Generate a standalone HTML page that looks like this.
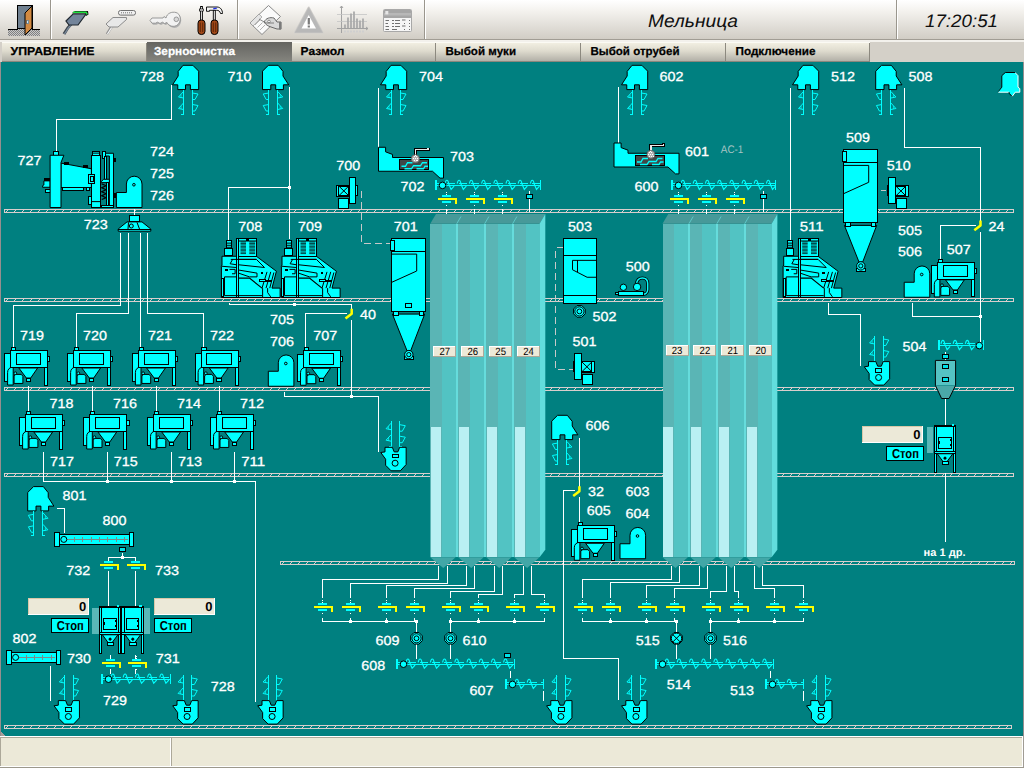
<!DOCTYPE html>
<html lang="ru"><head><meta charset="utf-8"><title>Мельница</title>
<style>html,body{margin:0;padding:0;background:#d4d0c8;overflow:hidden}svg{display:block;font-family:"Liberation Sans",sans-serif}text{white-space:pre}</style></head>
<body>
<svg width="1024" height="768" viewBox="0 0 1024 768">
<g shape-rendering="crispEdges">
<defs><linearGradient id="gTb" x1="0" y1="0" x2="0" y2="1"><stop offset="0" stop-color="#ffffff"/><stop offset="0.3" stop-color="#f3f1ed"/><stop offset="1" stop-color="#d1cdc5"/></linearGradient><linearGradient id="gTab" x1="0" y1="0" x2="0" y2="1"><stop offset="0" stop-color="#f4f1e4"/><stop offset="0.45" stop-color="#dedbce"/><stop offset="1" stop-color="#aeaca4"/></linearGradient><linearGradient id="gSel" x1="0" y1="0" x2="0" y2="1"><stop offset="0" stop-color="#646460"/><stop offset="1" stop-color="#85857f"/></linearGradient><pattern id="hatch" width="8" height="4" patternUnits="userSpaceOnUse"><rect width="8" height="4" fill="#008080"/><rect x="1" y="2" width="2" height="1" fill="#d4d0c8"/><rect x="3" y="1" width="2" height="1" fill="#d4d0c8"/></pattern><pattern id="dots" width="2" height="2" patternUnits="userSpaceOnUse"><rect width="2" height="2" fill="#c8c8c8"/><rect width="1" height="1" fill="#808080"/><rect x="1" y="1" width="1" height="1" fill="#808080"/></pattern></defs>
<rect x="0" y="0" width="1024" height="768" fill="#d4d0c8"/>
<rect x="0" y="0" width="1024" height="39" fill="url(#gTb)"/>
<rect x="0" y="39" width="1024" height="1" fill="#a19d94"/>
<rect x="0" y="40" width="1024" height="2" fill="#f3f1ec"/>
<rect x="50" y="0" width="1" height="39" fill="#9a968d"/>
<rect x="51" y="0" width="1" height="39" fill="#ffffff"/>
<rect x="237" y="0" width="1" height="39" fill="#9a968d"/>
<rect x="238" y="0" width="1" height="39" fill="#ffffff"/>
<rect x="424" y="0" width="1" height="39" fill="#9a968d"/>
<rect x="425" y="0" width="1" height="39" fill="#ffffff"/>
<rect x="896" y="0" width="1" height="39" fill="#9a968d"/>
<rect x="897" y="0" width="1" height="39" fill="#ffffff"/>
<rect x="0" y="42" width="1024" height="20" fill="#d4d0c8"/>
<rect x="2" y="42" width="145" height="20" fill="url(#gTab)"/>
<rect x="2" y="42" width="145" height="1" fill="#fbfaf4"/>
<rect x="146" y="43" width="1" height="19" fill="#8c897f"/>
<rect x="147" y="42" width="145" height="20" fill="url(#gSel)"/>
<rect x="292" y="42" width="144" height="20" fill="url(#gTab)"/>
<rect x="292" y="42" width="144" height="1" fill="#fbfaf4"/>
<rect x="435" y="43" width="1" height="19" fill="#8c897f"/>
<rect x="436" y="42" width="145" height="20" fill="url(#gTab)"/>
<rect x="436" y="42" width="145" height="1" fill="#fbfaf4"/>
<rect x="580" y="43" width="1" height="19" fill="#8c897f"/>
<rect x="581" y="42" width="145" height="20" fill="url(#gTab)"/>
<rect x="581" y="42" width="145" height="1" fill="#fbfaf4"/>
<rect x="725" y="43" width="1" height="19" fill="#8c897f"/>
<rect x="726" y="42" width="144" height="20" fill="url(#gTab)"/>
<rect x="726" y="42" width="144" height="1" fill="#fbfaf4"/>
<rect x="869" y="43" width="1" height="19" fill="#8c897f"/>
<rect x="2" y="61" width="868" height="1" fill="#8a877d"/>
<rect x="0" y="42" width="2" height="20" fill="#d4d0c8"/>
<rect x="0" y="62" width="1024" height="675" fill="#968e8e"/>
<rect x="1" y="62" width="1022" height="674" fill="#008080"/>
<polygon points="1,732 1,736 5,736" fill="#a8a09c" stroke="None" stroke-width="1"/>
<polygon points="1019,736 1023,736 1023,732" fill="#0a7474" stroke="None" stroke-width="1"/>
<rect x="0" y="736" width="1024" height="32" fill="#ece9d8"/>
<rect x="0" y="736" width="1024" height="1" fill="#ffffff"/>
<rect x="0" y="737" width="1022" height="1" fill="#aca899"/>
<rect x="0" y="737" width="1" height="30" fill="#aca899"/>
<rect x="170" y="738" width="1" height="29" fill="#ffffff"/>
<rect x="171" y="738" width="1" height="28" fill="#aca899"/>
<rect x="1022" y="737" width="1" height="30" fill="#ffffff"/>
<rect x="1023" y="736" width="1" height="32" fill="#a09c94"/>
<rect x="0" y="766" width="1023" height="1" fill="#ffffff"/>
<rect x="0" y="767" width="1024" height="1" fill="#9c988c"/>
<rect x="8" y="29" width="32" height="7" fill="url(#dots)"/>
<polygon points="17.5,5.5 32.5,5.5 32.5,28.5 17.5,28.5" fill="#708090" stroke="#000000" stroke-width="1"/>
<rect x="8" y="28.5" width="10" height="1" fill="#000000"/>
<rect x="32" y="28.5" width="8" height="1" fill="#000000"/>
<polygon points="25,13 32,6 32,28 25,35" fill="#d28a42" stroke="#000000" stroke-width="1" shape-rendering="geometricPrecision"/>
<rect x="26.5" y="20" width="2" height="3.5" fill="#c8e8f8" stroke="#405060" stroke-width="0.6"/>
<g shape-rendering="geometricPrecision"><path d="M64,34 C67,28 70,25 73,22" fill="none" stroke="#404850" stroke-width="3"/><path d="M64.5,34 C67.5,28 70.5,25 73.5,22.5" fill="none" stroke="#78889a" stroke-width="1.4"/><polygon points="66,21 73,14 86,14 78,25 69,25" fill="#73849a" stroke="#202830" stroke-width="1.2"/><polygon points="72,13 75,11 88,11 88.5,14.5 86,16 85.5,13.5 73,13.5" fill="#101010"/><path d="M73,12.2 H86 L87.2,14.4" fill="none" stroke="#20e040" stroke-width="1.6"/></g>
<g shape-rendering="geometricPrecision"><path d="M107,34 C110,28 113,25 116,22" fill="none" stroke="#909090" stroke-width="2.6"/><path d="M107.5,34 C110.5,28 113.5,25 116.5,22.5" fill="none" stroke="#f4f4f4" stroke-width="1.2"/><polygon points="106,24 113,17.5 126.5,17.5 126.5,19.5 118,27 109,27" fill="#e8e8e8" stroke="#8c8c8c" stroke-width="1"/><rect x="118.5" y="10.5" width="17" height="4.6" rx="2" fill="#f0f0f0" stroke="#707070" stroke-width="1"/><path d="M121,12.8 H133" stroke="#707070" stroke-width="1" stroke-dasharray="1,1"/></g>
<g shape-rendering="geometricPrecision"><path d="M150,20.5 L152,18 H163 L164,16.5 L166,18 C167,13 172,11.5 176,12.5 C181,14 181.5,21 178,24.5 C174,28 168.5,26 167,22.5 L164.5,23.5 L162.5,22.2 L160,23.5 L157.5,22.2 L155.5,23.2 H152 Z" fill="#b0b0b0" transform="translate(1,1.6)"/><path d="M150,20.5 L152,18 H163 L164,16.5 L166,18 C167,13 172,11.5 176,12.5 C181,14 181.5,21 178,24.5 C174,28 168.5,26 167,22.5 L164.5,23.5 L162.5,22.2 L160,23.5 L157.5,22.2 L155.5,23.2 H152 Z" fill="#f2f2f2" stroke="#909090" stroke-width="0.9"/><circle cx="176.3" cy="19.3" r="2.3" fill="#d8d8d8" stroke="#909090" stroke-width="0.9"/></g>
<g shape-rendering="geometricPrecision"><rect x="200.6" y="6.5" width="1.8" height="14" fill="#f0f0f0" stroke="#000" stroke-width="0.9"/><rect x="199.6" y="9" width="3.8" height="2" fill="#fff" stroke="#000" stroke-width="0.7"/><rect x="198" y="20" width="7" height="14.5" rx="3.2" fill="#a04818" stroke="#000" stroke-width="1"/><path d="M200.3,22.5 V32 M202.7,22.5 V32" stroke="#401800" stroke-width="0.7"/><rect x="213.3" y="10" width="2" height="11" fill="#f0f0f0" stroke="#000" stroke-width="0.9"/><rect x="211" y="20" width="7" height="14.5" rx="3.2" fill="#a04818" stroke="#000" stroke-width="1"/><path d="M213.3,22.5 V32 M215.7,22.5 V32" stroke="#401800" stroke-width="0.7"/><path d="M206.5,7 H217 C220.5,7 222.5,10 222.5,13.5 L220.5,13.5 C220,11 218.5,10.3 216.5,10.3 H209.5 V11.3 H206.5 Z" fill="#f4f4f4" stroke="#000" stroke-width="0.9"/><path d="M213.3,8.8 L216.8,8.1" stroke="#2030e0" stroke-width="1.4"/></g>
<g shape-rendering="geometricPrecision"><polygon points="250,23 268.5,5.5 280.5,16.5 262,34.5" fill="#fafafa" stroke="#8a8a8a" stroke-width="1"/><polygon points="250,23 259,14 262,17 253,26" fill="#e4e4e4" stroke="#8a8a8a" stroke-width="0.6"/><path d="M255,25 l5,-5 M257.5,27.5 l5,-5 M260,30 l5,-5" stroke="#a0a0a0" stroke-width="0.8"/><path d="M264,22 C266,18 270,17 274,18 L277,22 H281 V29 H277 L271,27 C268,26 266,25 264,22 Z" fill="#d8d8d8" stroke="#6a6a6a" stroke-width="1"/><circle cx="269" cy="21.5" r="1.3" fill="#fff" stroke="#6a6a6a" stroke-width="0.7"/><path d="M259,19 L266,23 L274,23" fill="none" stroke="#6a6a6a" stroke-width="0.8"/><rect x="279" y="22" width="2.2" height="7.5" fill="#7a7a7a"/></g>
<g shape-rendering="geometricPrecision"><polygon points="308.7,7.5 322.5,32.5 295,32.5" fill="#c6c6c6" stroke="#d2d0cc" stroke-width="2" stroke-linejoin="round"/><polygon points="308.7,7.5 322.5,32.5 295,32.5" fill="#b8b8b8" stroke="#bcbcbc" stroke-width="0.6" stroke-linejoin="round"/><polygon points="308.7,15 316,28.5 301.5,28.5" fill="#ffffff"/><rect x="307.7" y="18" width="2.2" height="6.5" fill="#7c7c7c"/><rect x="307.7" y="25.5" width="2.2" height="2" fill="#7c7c7c"/></g>
<g shape-rendering="geometricPrecision" stroke="#a2a2a2" fill="none"><path d="M341.5,6 V33 M337,28.5 H368 M341.5,6 l-1.5,2 M341.5,6 l1.5,2 M368,28.5 l-2,-1.5 M368,28.5 l-2,1.5" stroke-width="1"/><path d="M337,14.5 H367 M337,21.5 H367" stroke="#c4c4c4" stroke-width="0.8"/><path d="M345,28 V24.5 M348,28 V17.5 M351,28 V13.5 M354,28 V11.5 M357,28 V18.5 M360,28 V20.5 M363,28 V18.5" stroke="#ababab" stroke-width="1.8"/><path d="M344,31.5 H364" stroke="#cfcfcf" stroke-width="2" stroke-dasharray="2,1"/></g>
<g shape-rendering="geometricPrecision"><rect x="383.5" y="9.5" width="28" height="22" rx="1" fill="#f6f6f6" stroke="#a8a8a8" stroke-width="1"/><rect x="384" y="10" width="27" height="8" fill="#a6a6a6"/><rect x="384" y="13" width="27" height="2.5" fill="#b8b8b8"/><rect x="385.3" y="11" width="3" height="3.4" fill="#e6e6e6"/><path d="M385.5,20.5 H389 M392,20.5 H394 M395,20.5 H400 M402,20 H405.5 M409,20.5 H410" stroke="#707070" stroke-width="1"/><path d="M385.5,23.5 H388 M392,23.5 H394 M395,23.5 H400 M404,23.5 H405 M409,23.5 H410" stroke="#707070" stroke-width="1"/><path d="M385.5,26.5 H389 M392,26.5 H394 M395,26.5 H400 M402,26 H405.5 M409,26.5 H410" stroke="#707070" stroke-width="1"/><path d="M385.5,29.5 H389 M392,29.5 H397 M404,29.5 H405 M409,29.5 H410" stroke="#707070" stroke-width="1"/></g>
<defs><pattern id="hf1" x="4" y="209" width="8" height="4" patternUnits="userSpaceOnUse"><rect x="2" y="2" width="1" height="1" fill="#d8cecc"/><rect x="3" y="1" width="1" height="1" fill="#d8cecc"/></pattern></defs>
<rect x="4" y="209" width="1010" height="4" fill="url(#hf1)"/>
<rect x="4" y="209" width="1010" height="1" fill="#d8cecc"/>
<rect x="4" y="212" width="1010" height="1" fill="#d8cecc"/>
<rect x="4" y="209" width="1" height="4" fill="#d8cecc"/>
<rect x="1013" y="209" width="1" height="4" fill="#d8cecc"/>
<defs><pattern id="hf2" x="4" y="298" width="8" height="4" patternUnits="userSpaceOnUse"><rect x="2" y="2" width="1" height="1" fill="#d8cecc"/><rect x="3" y="1" width="1" height="1" fill="#d8cecc"/></pattern></defs>
<rect x="4" y="298" width="1010" height="4" fill="url(#hf2)"/>
<rect x="4" y="298" width="1010" height="1" fill="#d8cecc"/>
<rect x="4" y="301" width="1010" height="1" fill="#d8cecc"/>
<rect x="4" y="298" width="1" height="4" fill="#d8cecc"/>
<rect x="1013" y="298" width="1" height="4" fill="#d8cecc"/>
<defs><pattern id="hf3" x="4" y="387" width="8" height="4" patternUnits="userSpaceOnUse"><rect x="2" y="2" width="1" height="1" fill="#d8cecc"/><rect x="3" y="1" width="1" height="1" fill="#d8cecc"/></pattern></defs>
<rect x="4" y="387" width="1010" height="4" fill="url(#hf3)"/>
<rect x="4" y="387" width="1010" height="1" fill="#d8cecc"/>
<rect x="4" y="390" width="1010" height="1" fill="#d8cecc"/>
<rect x="4" y="387" width="1" height="4" fill="#d8cecc"/>
<rect x="1013" y="387" width="1" height="4" fill="#d8cecc"/>
<defs><pattern id="hf4" x="4" y="473" width="8" height="4" patternUnits="userSpaceOnUse"><rect x="2" y="2" width="1" height="1" fill="#d8cecc"/><rect x="3" y="1" width="1" height="1" fill="#d8cecc"/></pattern></defs>
<rect x="4" y="473" width="1010" height="4" fill="url(#hf4)"/>
<rect x="4" y="473" width="1010" height="1" fill="#d8cecc"/>
<rect x="4" y="476" width="1010" height="1" fill="#d8cecc"/>
<rect x="4" y="473" width="1" height="4" fill="#d8cecc"/>
<rect x="1013" y="473" width="1" height="4" fill="#d8cecc"/>
<defs><pattern id="hf5" x="280" y="561" width="8" height="4" patternUnits="userSpaceOnUse"><rect x="2" y="2" width="1" height="1" fill="#d8cecc"/><rect x="3" y="1" width="1" height="1" fill="#d8cecc"/></pattern></defs>
<rect x="280" y="561" width="735" height="4" fill="url(#hf5)"/>
<rect x="280" y="561" width="735" height="1" fill="#d8cecc"/>
<rect x="280" y="564" width="735" height="1" fill="#d8cecc"/>
<rect x="280" y="561" width="1" height="4" fill="#d8cecc"/>
<rect x="1014" y="561" width="1" height="4" fill="#d8cecc"/>
<defs><pattern id="hf6" x="4" y="725" width="8" height="4" patternUnits="userSpaceOnUse"><rect x="2" y="2" width="1" height="1" fill="#d8cecc"/><rect x="3" y="1" width="1" height="1" fill="#d8cecc"/></pattern></defs>
<rect x="4" y="725" width="1008" height="4" fill="url(#hf6)"/>
<rect x="4" y="725" width="1008" height="1" fill="#d8cecc"/>
<rect x="4" y="728" width="1008" height="1" fill="#d8cecc"/>
<rect x="4" y="725" width="1" height="4" fill="#d8cecc"/>
<rect x="1011" y="725" width="1" height="4" fill="#d8cecc"/>
<polyline points="171.5,84.5 171.5,119.5 56.5,119.5 56.5,152.5" fill="none" stroke="#ffffff" stroke-width="1"/>
<polyline points="289.5,86.5 289.5,238.5" fill="none" stroke="#ffffff" stroke-width="1"/>
<polyline points="289.5,187.5 228.5,187.5 228.5,240.5" fill="none" stroke="#ffffff" stroke-width="1"/>
<rect x="288" y="186" width="3" height="3" fill="#ffffff"/>
<polyline points="378.5,87.5 378.5,147.5" fill="none" stroke="#ffffff" stroke-width="1"/>
<polyline points="618.5,86.5 618.5,143.5" fill="none" stroke="#ffffff" stroke-width="1"/>
<polyline points="790.5,87.5 790.5,240.5" fill="none" stroke="#ffffff" stroke-width="1"/>
<polyline points="904.5,87.5 904.5,147.5 980.5,147.5 980.5,341.5" fill="none" stroke="#ffffff" stroke-width="1"/>
<polyline points="975.5,225.5 940.5,225.5 940.5,260.5" fill="none" stroke="#ffffff" stroke-width="1"/>
<polyline points="912.5,302.5 912.5,316.5 980.5,316.5" fill="none" stroke="#ffffff" stroke-width="1"/>
<rect x="979" y="315" width="3" height="3" fill="#ffffff"/>
<polyline points="134.5,208.5 134.5,216.5" fill="none" stroke="#ffffff" stroke-width="1"/>
<polyline points="120.5,232.5 120.5,305.5 13.5,305.5 13.5,348.5" fill="none" stroke="#ffffff" stroke-width="1"/>
<polyline points="128.5,232.5 128.5,313.5 76.5,313.5 76.5,348.5" fill="none" stroke="#ffffff" stroke-width="1"/>
<polyline points="140.5,232.5 140.5,348.5" fill="none" stroke="#ffffff" stroke-width="1"/>
<polyline points="147.5,232.5 147.5,313.5 203.5,313.5 203.5,348.5" fill="none" stroke="#ffffff" stroke-width="1"/>
<polyline points="28.5,385.5 28.5,412.5" fill="none" stroke="#ffffff" stroke-width="1"/>
<polyline points="92.5,385.5 92.5,412.5" fill="none" stroke="#ffffff" stroke-width="1"/>
<polyline points="156.5,385.5 156.5,412.5" fill="none" stroke="#ffffff" stroke-width="1"/>
<polyline points="219.5,385.5 219.5,412.5" fill="none" stroke="#ffffff" stroke-width="1"/>
<polyline points="43.5,451.5 43.5,481.5" fill="none" stroke="#ffffff" stroke-width="1"/>
<polyline points="107.5,451.5 107.5,481.5" fill="none" stroke="#ffffff" stroke-width="1"/>
<polyline points="171.5,451.5 171.5,481.5" fill="none" stroke="#ffffff" stroke-width="1"/>
<polyline points="234.5,451.5 234.5,481.5" fill="none" stroke="#ffffff" stroke-width="1"/>
<polyline points="43.5,481.5 255.5,481.5 255.5,701.5" fill="none" stroke="#ffffff" stroke-width="1"/>
<rect x="106" y="480" width="3" height="3" fill="#ffffff"/>
<rect x="170" y="480" width="3" height="3" fill="#ffffff"/>
<rect x="233" y="480" width="3" height="3" fill="#ffffff"/>
<polyline points="229.5,302.5 229.5,304.5 351.5,304.5 351.5,396.5" fill="none" stroke="#ffffff" stroke-width="1"/>
<polyline points="294.5,302.5 294.5,304.5" fill="none" stroke="#ffffff" stroke-width="1"/>
<rect x="293" y="303" width="3" height="3" fill="#ffffff"/>
<polyline points="346.5,313.5 305.5,313.5 305.5,348.5" fill="none" stroke="#ffffff" stroke-width="1"/>
<polyline points="284.5,391.5 284.5,396.5 378.5,396.5 378.5,451.5" fill="none" stroke="#ffffff" stroke-width="1"/>
<rect x="350" y="395" width="3" height="3" fill="#ffffff"/>
<polyline points="579.5,437.5 579.5,523.5" fill="none" stroke="#ffffff" stroke-width="1"/>
<polyline points="574.5,490.5 563.5,490.5 563.5,658.5 618.5,658.5 618.5,699.5" fill="none" stroke="#ffffff" stroke-width="1"/>
<polyline points="828.5,302.5 828.5,314.5 860.5,314.5 860.5,365.5" fill="none" stroke="#ffffff" stroke-width="1"/>
<polyline points="945.5,351.5 945.5,360.5" fill="none" stroke="#ffffff" stroke-width="1"/>
<polyline points="945.5,398.5 945.5,425.5" fill="none" stroke="#ffffff" stroke-width="1"/>
<polyline points="945.5,472.5 945.5,541.5" fill="none" stroke="#ffffff" stroke-width="1"/>
<polyline points="56.5,508.5 64.5,508.5 64.5,532.5" fill="none" stroke="#ffffff" stroke-width="1"/>
<polyline points="122.5,552.5 122.5,557.5" fill="none" stroke="#ffffff" stroke-width="1"/>
<polyline points="108.5,561.5 108.5,557.5 135.5,557.5 135.5,561.5" fill="none" stroke="#ffffff" stroke-width="1"/>
<rect x="121" y="556" width="3" height="3" fill="#ffffff"/>
<polyline points="108.5,570.5 108.5,606.5" fill="none" stroke="#ffffff" stroke-width="1"/>
<polyline points="135.5,570.5 135.5,606.5" fill="none" stroke="#ffffff" stroke-width="1"/>
<polyline points="50.5,665.5 50.5,700.5" fill="none" stroke="#ffffff" stroke-width="1"/>
<polyline points="110.5,654.5 110.5,659.5" fill="none" stroke="#ffffff" stroke-width="1"/>
<polyline points="135.5,654.5 135.5,659.5" fill="none" stroke="#ffffff" stroke-width="1"/>
<polyline points="110.5,668.5 110.5,673.5" fill="none" stroke="#ffffff" stroke-width="1"/>
<polyline points="135.5,668.5 135.5,673.5" fill="none" stroke="#ffffff" stroke-width="1"/>
<polyline points="361.5,190.5 361.5,243.5 390.5,243.5" fill="none" stroke="#c8c8c8" stroke-width="1" stroke-dasharray="7,4"/>
<polyline points="563.5,247.5 555.5,247.5 555.5,369.5 573.5,369.5" fill="none" stroke="#c8c8c8" stroke-width="1" stroke-dasharray="7,4"/>
<polyline points="881,190.5 886,190.5" fill="none" stroke="#c8c8c8" stroke-width="1"/>
<polyline points="438.5,565.5 438.5,579.5 322.5,579.5 322.5,597.5" fill="none" stroke="#ffffff" stroke-width="1"/>
<polyline points="447.5,565.5 447.5,583.5 350.5,583.5 350.5,597.5" fill="none" stroke="#ffffff" stroke-width="1"/>
<polyline points="466.5,565.5 466.5,585.5 386.5,585.5 386.5,597.5" fill="none" stroke="#ffffff" stroke-width="1"/>
<polyline points="474.5,565.5 474.5,588.5 414.5,588.5 414.5,597.5" fill="none" stroke="#ffffff" stroke-width="1"/>
<polyline points="494.5,565.5 494.5,591.5 450.5,591.5 450.5,597.5" fill="none" stroke="#ffffff" stroke-width="1"/>
<polyline points="502.5,565.5 502.5,594.5 478.5,594.5 478.5,597.5" fill="none" stroke="#ffffff" stroke-width="1"/>
<polyline points="523.5,565.5 523.5,594.5 514.5,594.5 514.5,597.5" fill="none" stroke="#ffffff" stroke-width="1"/>
<polyline points="531.5,565.5 531.5,594.5 544.5,594.5 544.5,597.5" fill="none" stroke="#ffffff" stroke-width="1"/>
<polyline points="671.5,565.5 671.5,579.5 582.5,579.5 582.5,597.5" fill="none" stroke="#ffffff" stroke-width="1"/>
<polyline points="679.5,565.5 679.5,582.5 610.5,582.5 610.5,597.5" fill="none" stroke="#ffffff" stroke-width="1"/>
<polyline points="699.5,565.5 699.5,585.5 646.5,585.5 646.5,597.5" fill="none" stroke="#ffffff" stroke-width="1"/>
<polyline points="707.5,565.5 707.5,588.5 674.5,588.5 674.5,597.5" fill="none" stroke="#ffffff" stroke-width="1"/>
<polyline points="726.5,565.5 726.5,591.5 710.5,591.5 710.5,597.5" fill="none" stroke="#ffffff" stroke-width="1"/>
<polyline points="734.5,565.5 734.5,591.5 738.5,591.5 738.5,597.5" fill="none" stroke="#ffffff" stroke-width="1"/>
<polyline points="754.5,565.5 754.5,588.5 774.5,588.5 774.5,597.5" fill="none" stroke="#ffffff" stroke-width="1"/>
<polyline points="762.5,565.5 762.5,585.5 803.5,585.5 803.5,597.5" fill="none" stroke="#ffffff" stroke-width="1"/>
<rect x="318" y="603" width="8.5" height="2" fill="#00ffff"/>
<rect x="318" y="609" width="8.5" height="2" fill="#00ffff"/>
<rect x="314" y="606" width="19" height="2" fill="#ffff00"/>
<rect x="331" y="606" width="2" height="6" fill="#ffff00"/>
<rect x="322" y="600" width="1" height="1" fill="#ffffff"/>
<rect x="322" y="602" width="1" height="1" fill="#ffffff"/>
<rect x="322" y="612.5" width="1" height="1" fill="#ffffff"/>
<polyline points="322.5,617.5 322.5,621.5" fill="none" stroke="#ffffff" stroke-width="1"/>
<rect x="346" y="603" width="8.5" height="2" fill="#00ffff"/>
<rect x="346" y="609" width="8.5" height="2" fill="#00ffff"/>
<rect x="342" y="606" width="19" height="2" fill="#ffff00"/>
<rect x="359" y="606" width="2" height="6" fill="#ffff00"/>
<rect x="350" y="600" width="1" height="1" fill="#ffffff"/>
<rect x="350" y="602" width="1" height="1" fill="#ffffff"/>
<rect x="350" y="612.5" width="1" height="1" fill="#ffffff"/>
<polyline points="350.5,617.5 350.5,621.5" fill="none" stroke="#ffffff" stroke-width="1"/>
<rect x="382" y="603" width="8.5" height="2" fill="#00ffff"/>
<rect x="382" y="609" width="8.5" height="2" fill="#00ffff"/>
<rect x="378" y="606" width="19" height="2" fill="#ffff00"/>
<rect x="395" y="606" width="2" height="6" fill="#ffff00"/>
<rect x="386" y="600" width="1" height="1" fill="#ffffff"/>
<rect x="386" y="602" width="1" height="1" fill="#ffffff"/>
<rect x="386" y="612.5" width="1" height="1" fill="#ffffff"/>
<polyline points="386.5,617.5 386.5,621.5" fill="none" stroke="#ffffff" stroke-width="1"/>
<rect x="410" y="603" width="8.5" height="2" fill="#00ffff"/>
<rect x="410" y="609" width="8.5" height="2" fill="#00ffff"/>
<rect x="406" y="606" width="19" height="2" fill="#ffff00"/>
<rect x="423" y="606" width="2" height="6" fill="#ffff00"/>
<rect x="414" y="600" width="1" height="1" fill="#ffffff"/>
<rect x="414" y="602" width="1" height="1" fill="#ffffff"/>
<rect x="414" y="612.5" width="1" height="1" fill="#ffffff"/>
<polyline points="414.5,617.5 414.5,621.5" fill="none" stroke="#ffffff" stroke-width="1"/>
<rect x="446" y="603" width="8.5" height="2" fill="#00ffff"/>
<rect x="446" y="609" width="8.5" height="2" fill="#00ffff"/>
<rect x="442" y="606" width="19" height="2" fill="#ffff00"/>
<rect x="459" y="606" width="2" height="6" fill="#ffff00"/>
<rect x="450" y="600" width="1" height="1" fill="#ffffff"/>
<rect x="450" y="602" width="1" height="1" fill="#ffffff"/>
<rect x="450" y="612.5" width="1" height="1" fill="#ffffff"/>
<polyline points="450.5,617.5 450.5,621.5" fill="none" stroke="#ffffff" stroke-width="1"/>
<rect x="474" y="603" width="8.5" height="2" fill="#00ffff"/>
<rect x="474" y="609" width="8.5" height="2" fill="#00ffff"/>
<rect x="470" y="606" width="19" height="2" fill="#ffff00"/>
<rect x="487" y="606" width="2" height="6" fill="#ffff00"/>
<rect x="478" y="600" width="1" height="1" fill="#ffffff"/>
<rect x="478" y="602" width="1" height="1" fill="#ffffff"/>
<rect x="478" y="612.5" width="1" height="1" fill="#ffffff"/>
<polyline points="478.5,617.5 478.5,621.5" fill="none" stroke="#ffffff" stroke-width="1"/>
<rect x="510" y="603" width="8.5" height="2" fill="#00ffff"/>
<rect x="510" y="609" width="8.5" height="2" fill="#00ffff"/>
<rect x="506" y="606" width="19" height="2" fill="#ffff00"/>
<rect x="523" y="606" width="2" height="6" fill="#ffff00"/>
<rect x="514" y="600" width="1" height="1" fill="#ffffff"/>
<rect x="514" y="602" width="1" height="1" fill="#ffffff"/>
<rect x="514" y="612.5" width="1" height="1" fill="#ffffff"/>
<polyline points="514.5,617.5 514.5,621.5" fill="none" stroke="#ffffff" stroke-width="1"/>
<rect x="540" y="603" width="8.5" height="2" fill="#00ffff"/>
<rect x="540" y="609" width="8.5" height="2" fill="#00ffff"/>
<rect x="536" y="606" width="19" height="2" fill="#ffff00"/>
<rect x="553" y="606" width="2" height="6" fill="#ffff00"/>
<rect x="544" y="600" width="1" height="1" fill="#ffffff"/>
<rect x="544" y="602" width="1" height="1" fill="#ffffff"/>
<rect x="544" y="612.5" width="1" height="1" fill="#ffffff"/>
<polyline points="544.5,617.5 544.5,621.5" fill="none" stroke="#ffffff" stroke-width="1"/>
<rect x="578" y="603" width="8.5" height="2" fill="#00ffff"/>
<rect x="578" y="609" width="8.5" height="2" fill="#00ffff"/>
<rect x="574" y="606" width="19" height="2" fill="#ffff00"/>
<rect x="591" y="606" width="2" height="6" fill="#ffff00"/>
<rect x="582" y="600" width="1" height="1" fill="#ffffff"/>
<rect x="582" y="602" width="1" height="1" fill="#ffffff"/>
<rect x="582" y="612.5" width="1" height="1" fill="#ffffff"/>
<polyline points="582.5,617.5 582.5,621.5" fill="none" stroke="#ffffff" stroke-width="1"/>
<rect x="606" y="603" width="8.5" height="2" fill="#00ffff"/>
<rect x="606" y="609" width="8.5" height="2" fill="#00ffff"/>
<rect x="602" y="606" width="19" height="2" fill="#ffff00"/>
<rect x="619" y="606" width="2" height="6" fill="#ffff00"/>
<rect x="610" y="600" width="1" height="1" fill="#ffffff"/>
<rect x="610" y="602" width="1" height="1" fill="#ffffff"/>
<rect x="610" y="612.5" width="1" height="1" fill="#ffffff"/>
<polyline points="610.5,617.5 610.5,621.5" fill="none" stroke="#ffffff" stroke-width="1"/>
<rect x="642" y="603" width="8.5" height="2" fill="#00ffff"/>
<rect x="642" y="609" width="8.5" height="2" fill="#00ffff"/>
<rect x="638" y="606" width="19" height="2" fill="#ffff00"/>
<rect x="655" y="606" width="2" height="6" fill="#ffff00"/>
<rect x="646" y="600" width="1" height="1" fill="#ffffff"/>
<rect x="646" y="602" width="1" height="1" fill="#ffffff"/>
<rect x="646" y="612.5" width="1" height="1" fill="#ffffff"/>
<polyline points="646.5,617.5 646.5,621.5" fill="none" stroke="#ffffff" stroke-width="1"/>
<rect x="670" y="603" width="8.5" height="2" fill="#00ffff"/>
<rect x="670" y="609" width="8.5" height="2" fill="#00ffff"/>
<rect x="666" y="606" width="19" height="2" fill="#ffff00"/>
<rect x="683" y="606" width="2" height="6" fill="#ffff00"/>
<rect x="674" y="600" width="1" height="1" fill="#ffffff"/>
<rect x="674" y="602" width="1" height="1" fill="#ffffff"/>
<rect x="674" y="612.5" width="1" height="1" fill="#ffffff"/>
<polyline points="674.5,617.5 674.5,621.5" fill="none" stroke="#ffffff" stroke-width="1"/>
<rect x="706" y="603" width="8.5" height="2" fill="#00ffff"/>
<rect x="706" y="609" width="8.5" height="2" fill="#00ffff"/>
<rect x="702" y="606" width="19" height="2" fill="#ffff00"/>
<rect x="719" y="606" width="2" height="6" fill="#ffff00"/>
<rect x="710" y="600" width="1" height="1" fill="#ffffff"/>
<rect x="710" y="602" width="1" height="1" fill="#ffffff"/>
<rect x="710" y="612.5" width="1" height="1" fill="#ffffff"/>
<polyline points="710.5,617.5 710.5,621.5" fill="none" stroke="#ffffff" stroke-width="1"/>
<rect x="734" y="603" width="8.5" height="2" fill="#00ffff"/>
<rect x="734" y="609" width="8.5" height="2" fill="#00ffff"/>
<rect x="730" y="606" width="19" height="2" fill="#ffff00"/>
<rect x="747" y="606" width="2" height="6" fill="#ffff00"/>
<rect x="738" y="600" width="1" height="1" fill="#ffffff"/>
<rect x="738" y="602" width="1" height="1" fill="#ffffff"/>
<rect x="738" y="612.5" width="1" height="1" fill="#ffffff"/>
<polyline points="738.5,617.5 738.5,621.5" fill="none" stroke="#ffffff" stroke-width="1"/>
<rect x="770" y="603" width="8.5" height="2" fill="#00ffff"/>
<rect x="770" y="609" width="8.5" height="2" fill="#00ffff"/>
<rect x="766" y="606" width="19" height="2" fill="#ffff00"/>
<rect x="783" y="606" width="2" height="6" fill="#ffff00"/>
<rect x="774" y="600" width="1" height="1" fill="#ffffff"/>
<rect x="774" y="602" width="1" height="1" fill="#ffffff"/>
<rect x="774" y="612.5" width="1" height="1" fill="#ffffff"/>
<polyline points="774.5,617.5 774.5,621.5" fill="none" stroke="#ffffff" stroke-width="1"/>
<rect x="799" y="603" width="8.5" height="2" fill="#00ffff"/>
<rect x="799" y="609" width="8.5" height="2" fill="#00ffff"/>
<rect x="795" y="606" width="19" height="2" fill="#ffff00"/>
<rect x="812" y="606" width="2" height="6" fill="#ffff00"/>
<rect x="803" y="600" width="1" height="1" fill="#ffffff"/>
<rect x="803" y="602" width="1" height="1" fill="#ffffff"/>
<rect x="803" y="612.5" width="1" height="1" fill="#ffffff"/>
<polyline points="803.5,617.5 803.5,621.5" fill="none" stroke="#ffffff" stroke-width="1"/>
<polyline points="322.5,621.5 416.5,621.5 416.5,658.5" fill="none" stroke="#ffffff" stroke-width="1"/>
<polyline points="544.5,621.5 450.5,621.5 450.5,658.5" fill="none" stroke="#ffffff" stroke-width="1"/>
<polyline points="582.5,621.5 676.5,621.5 676.5,658.5" fill="none" stroke="#ffffff" stroke-width="1"/>
<polyline points="803.5,621.5 710.5,621.5 710.5,658.5" fill="none" stroke="#ffffff" stroke-width="1"/>
<rect x="349" y="620" width="3" height="3" fill="#ffffff"/>
<rect x="385" y="620" width="3" height="3" fill="#ffffff"/>
<rect x="415" y="620" width="3" height="3" fill="#ffffff"/>
<rect x="449" y="620" width="3" height="3" fill="#ffffff"/>
<rect x="477" y="620" width="3" height="3" fill="#ffffff"/>
<rect x="513" y="620" width="3" height="3" fill="#ffffff"/>
<rect x="609" y="620" width="3" height="3" fill="#ffffff"/>
<rect x="645" y="620" width="3" height="3" fill="#ffffff"/>
<rect x="675" y="620" width="3" height="3" fill="#ffffff"/>
<rect x="709" y="620" width="3" height="3" fill="#ffffff"/>
<rect x="737" y="620" width="3" height="3" fill="#ffffff"/>
<rect x="773" y="620" width="3" height="3" fill="#ffffff"/>
<polyline points="510.5,670.5 510.5,677.5" fill="none" stroke="#ffffff" stroke-width="1"/>
<polyline points="543.5,690.5 543.5,700.5" fill="none" stroke="#ffffff" stroke-width="1"/>
<polyline points="770.5,670.5 770.5,677.5" fill="none" stroke="#ffffff" stroke-width="1"/>
<polyline points="803.5,690.5 803.5,700.5" fill="none" stroke="#ffffff" stroke-width="1"/>
<polygon points="430.25,223.75 436,214 545.3,214 539.55,223.75" fill="#479999" stroke="None" stroke-width="1" shape-rendering="geometricPrecision"/>
<polygon points="539.55,223.75 545.3,214 545.3,549.75 539.55,557.25" fill="#62dddd" stroke="None" stroke-width="1" shape-rendering="geometricPrecision"/>
<rect x="430.25" y="223.75" width="11.5" height="333.5" fill="#5ab5b5"/>
<rect x="441.75" y="223.75" width="13.95" height="333.5" fill="#52c3c3"/>
<rect x="455.7" y="223.75" width="2.5" height="333.5" fill="#66dcdc"/>
<polyline points="456.7,223.75 461.01,216.5" fill="none" stroke="#66dcdc" stroke-width="1" shape-rendering="geometricPrecision" opacity="0.7"/>
<rect x="430.75" y="427" width="10" height="130.25" fill="#b9f0f3"/>
<polygon points="430.25,557.25 455.7,557.25 443.28,568" fill="#42a7a7" stroke="None" stroke-width="1" shape-rendering="geometricPrecision"/>
<rect x="433.25" y="346.3" width="22.5" height="10.5" fill="#ece9d8"/>
<rect x="433.25" y="346.3" width="22.5" height="1" fill="#ffffff"/>
<rect x="433.25" y="346.3" width="1" height="10.5" fill="#ffffff"/>
<rect x="433.25" y="356.3" width="22.5" height="1" fill="#aca899"/>
<rect x="455.25" y="346.3" width="1" height="11" fill="#aca899"/>
<rect x="458.2" y="223.75" width="11.5" height="333.5" fill="#5ab5b5"/>
<rect x="469.7" y="223.75" width="13.95" height="333.5" fill="#52c3c3"/>
<rect x="483.65" y="223.75" width="2.5" height="333.5" fill="#66dcdc"/>
<polyline points="484.65,223.75 488.96,216.5" fill="none" stroke="#66dcdc" stroke-width="1" shape-rendering="geometricPrecision" opacity="0.7"/>
<rect x="458.7" y="427" width="10" height="130.25" fill="#b9f0f3"/>
<polygon points="458.2,557.25 483.65,557.25 471.23,568" fill="#42a7a7" stroke="None" stroke-width="1" shape-rendering="geometricPrecision"/>
<rect x="461.2" y="346.3" width="22.5" height="10.5" fill="#ece9d8"/>
<rect x="461.2" y="346.3" width="22.5" height="1" fill="#ffffff"/>
<rect x="461.2" y="346.3" width="1" height="10.5" fill="#ffffff"/>
<rect x="461.2" y="356.3" width="22.5" height="1" fill="#aca899"/>
<rect x="483.2" y="346.3" width="1" height="11" fill="#aca899"/>
<rect x="486.15" y="223.75" width="11.5" height="333.5" fill="#5ab5b5"/>
<rect x="497.65" y="223.75" width="13.95" height="333.5" fill="#52c3c3"/>
<rect x="511.6" y="223.75" width="2.5" height="333.5" fill="#66dcdc"/>
<polyline points="512.6,223.75 516.91,216.5" fill="none" stroke="#66dcdc" stroke-width="1" shape-rendering="geometricPrecision" opacity="0.7"/>
<rect x="486.65" y="427" width="10" height="130.25" fill="#b9f0f3"/>
<polygon points="486.15,557.25 511.6,557.25 499.18,568" fill="#42a7a7" stroke="None" stroke-width="1" shape-rendering="geometricPrecision"/>
<rect x="489.15" y="346.3" width="22.5" height="10.5" fill="#ece9d8"/>
<rect x="489.15" y="346.3" width="22.5" height="1" fill="#ffffff"/>
<rect x="489.15" y="346.3" width="1" height="10.5" fill="#ffffff"/>
<rect x="489.15" y="356.3" width="22.5" height="1" fill="#aca899"/>
<rect x="511.15" y="346.3" width="1" height="11" fill="#aca899"/>
<rect x="514.1" y="223.75" width="11.5" height="333.5" fill="#5ab5b5"/>
<rect x="525.6" y="223.75" width="13.95" height="333.5" fill="#52c3c3"/>
<rect x="514.6" y="427" width="10" height="130.25" fill="#b9f0f3"/>
<polygon points="514.1,557.25 539.55,557.25 527.12,568" fill="#42a7a7" stroke="None" stroke-width="1" shape-rendering="geometricPrecision"/>
<rect x="517.1" y="346.3" width="22.5" height="10.5" fill="#ece9d8"/>
<rect x="517.1" y="346.3" width="22.5" height="1" fill="#ffffff"/>
<rect x="517.1" y="346.3" width="1" height="10.5" fill="#ffffff"/>
<rect x="517.1" y="356.3" width="22.5" height="1" fill="#aca899"/>
<rect x="539.1" y="346.3" width="1" height="11" fill="#aca899"/>
<polygon points="662.5,223.75 668.25,214 777.35,214 771.6,223.75" fill="#479999" stroke="None" stroke-width="1" shape-rendering="geometricPrecision"/>
<polygon points="771.6,223.75 777.35,214 777.35,549.75 771.6,557.25" fill="#62dddd" stroke="None" stroke-width="1" shape-rendering="geometricPrecision"/>
<rect x="662.5" y="223.75" width="11.5" height="333.5" fill="#5ab5b5"/>
<rect x="674" y="223.75" width="13.9" height="333.5" fill="#52c3c3"/>
<rect x="687.9" y="223.75" width="2.5" height="333.5" fill="#66dcdc"/>
<polyline points="688.9,223.75 693.21,216.5" fill="none" stroke="#66dcdc" stroke-width="1" shape-rendering="geometricPrecision" opacity="0.7"/>
<rect x="663" y="427" width="10" height="130.25" fill="#b9f0f3"/>
<polygon points="662.5,557.25 687.9,557.25 675.5,568" fill="#42a7a7" stroke="None" stroke-width="1" shape-rendering="geometricPrecision"/>
<rect x="665.5" y="345.2" width="22.5" height="10.5" fill="#ece9d8"/>
<rect x="665.5" y="345.2" width="22.5" height="1" fill="#ffffff"/>
<rect x="665.5" y="345.2" width="1" height="10.5" fill="#ffffff"/>
<rect x="665.5" y="355.2" width="22.5" height="1" fill="#aca899"/>
<rect x="687.5" y="345.2" width="1" height="11" fill="#aca899"/>
<rect x="690.4" y="223.75" width="11.5" height="333.5" fill="#5ab5b5"/>
<rect x="701.9" y="223.75" width="13.9" height="333.5" fill="#52c3c3"/>
<rect x="715.8" y="223.75" width="2.5" height="333.5" fill="#66dcdc"/>
<polyline points="716.8,223.75 721.11,216.5" fill="none" stroke="#66dcdc" stroke-width="1" shape-rendering="geometricPrecision" opacity="0.7"/>
<rect x="690.9" y="427" width="10" height="130.25" fill="#b9f0f3"/>
<polygon points="690.4,557.25 715.8,557.25 703.4,568" fill="#42a7a7" stroke="None" stroke-width="1" shape-rendering="geometricPrecision"/>
<rect x="693.4" y="345.2" width="22.5" height="10.5" fill="#ece9d8"/>
<rect x="693.4" y="345.2" width="22.5" height="1" fill="#ffffff"/>
<rect x="693.4" y="345.2" width="1" height="10.5" fill="#ffffff"/>
<rect x="693.4" y="355.2" width="22.5" height="1" fill="#aca899"/>
<rect x="715.4" y="345.2" width="1" height="11" fill="#aca899"/>
<rect x="718.3" y="223.75" width="11.5" height="333.5" fill="#5ab5b5"/>
<rect x="729.8" y="223.75" width="13.9" height="333.5" fill="#52c3c3"/>
<rect x="743.7" y="223.75" width="2.5" height="333.5" fill="#66dcdc"/>
<polyline points="744.7,223.75 749.01,216.5" fill="none" stroke="#66dcdc" stroke-width="1" shape-rendering="geometricPrecision" opacity="0.7"/>
<rect x="718.8" y="427" width="10" height="130.25" fill="#b9f0f3"/>
<polygon points="718.3,557.25 743.7,557.25 731.3,568" fill="#42a7a7" stroke="None" stroke-width="1" shape-rendering="geometricPrecision"/>
<rect x="721.3" y="345.2" width="22.5" height="10.5" fill="#ece9d8"/>
<rect x="721.3" y="345.2" width="22.5" height="1" fill="#ffffff"/>
<rect x="721.3" y="345.2" width="1" height="10.5" fill="#ffffff"/>
<rect x="721.3" y="355.2" width="22.5" height="1" fill="#aca899"/>
<rect x="743.3" y="345.2" width="1" height="11" fill="#aca899"/>
<rect x="746.2" y="223.75" width="11.5" height="333.5" fill="#5ab5b5"/>
<rect x="757.7" y="223.75" width="13.9" height="333.5" fill="#52c3c3"/>
<rect x="746.7" y="427" width="10" height="130.25" fill="#b9f0f3"/>
<polygon points="746.2,557.25 771.6,557.25 759.2,568" fill="#42a7a7" stroke="None" stroke-width="1" shape-rendering="geometricPrecision"/>
<rect x="749.2" y="345.2" width="22.5" height="10.5" fill="#ece9d8"/>
<rect x="749.2" y="345.2" width="22.5" height="1" fill="#ffffff"/>
<rect x="749.2" y="345.2" width="1" height="10.5" fill="#ffffff"/>
<rect x="749.2" y="355.2" width="22.5" height="1" fill="#aca899"/>
<rect x="771.2" y="345.2" width="1" height="11" fill="#aca899"/>
<rect x="442" y="195" width="8.5" height="2" fill="#00ffff"/>
<rect x="442" y="201" width="8.5" height="2" fill="#00ffff"/>
<rect x="438" y="198" width="19" height="2" fill="#ffff00"/>
<rect x="455" y="198" width="2" height="6" fill="#ffff00"/>
<rect x="446" y="192" width="1" height="1" fill="#ffffff"/>
<rect x="446" y="194" width="1" height="1" fill="#ffffff"/>
<rect x="446" y="204.5" width="1" height="1" fill="#ffffff"/>
<polyline points="446.5,208.5 446.5,214" fill="none" stroke="#ffffff" stroke-width="1"/>
<rect x="470" y="195" width="8.5" height="2" fill="#00ffff"/>
<rect x="470" y="201" width="8.5" height="2" fill="#00ffff"/>
<rect x="466" y="198" width="19" height="2" fill="#ffff00"/>
<rect x="483" y="198" width="2" height="6" fill="#ffff00"/>
<rect x="474" y="192" width="1" height="1" fill="#ffffff"/>
<rect x="474" y="194" width="1" height="1" fill="#ffffff"/>
<rect x="474" y="204.5" width="1" height="1" fill="#ffffff"/>
<polyline points="474.5,208.5 474.5,214" fill="none" stroke="#ffffff" stroke-width="1"/>
<rect x="498" y="195" width="8.5" height="2" fill="#00ffff"/>
<rect x="498" y="201" width="8.5" height="2" fill="#00ffff"/>
<rect x="494" y="198" width="19" height="2" fill="#ffff00"/>
<rect x="511" y="198" width="2" height="6" fill="#ffff00"/>
<rect x="502" y="192" width="1" height="1" fill="#ffffff"/>
<rect x="502" y="194" width="1" height="1" fill="#ffffff"/>
<rect x="502" y="204.5" width="1" height="1" fill="#ffffff"/>
<polyline points="502.5,208.5 502.5,214" fill="none" stroke="#ffffff" stroke-width="1"/>
<rect x="674" y="195" width="8.5" height="2" fill="#00ffff"/>
<rect x="674" y="201" width="8.5" height="2" fill="#00ffff"/>
<rect x="670" y="198" width="19" height="2" fill="#ffff00"/>
<rect x="687" y="198" width="2" height="6" fill="#ffff00"/>
<rect x="678" y="192" width="1" height="1" fill="#ffffff"/>
<rect x="678" y="194" width="1" height="1" fill="#ffffff"/>
<rect x="678" y="204.5" width="1" height="1" fill="#ffffff"/>
<polyline points="678.5,208.5 678.5,214" fill="none" stroke="#ffffff" stroke-width="1"/>
<rect x="702" y="195" width="8.5" height="2" fill="#00ffff"/>
<rect x="702" y="201" width="8.5" height="2" fill="#00ffff"/>
<rect x="698" y="198" width="19" height="2" fill="#ffff00"/>
<rect x="715" y="198" width="2" height="6" fill="#ffff00"/>
<rect x="706" y="192" width="1" height="1" fill="#ffffff"/>
<rect x="706" y="194" width="1" height="1" fill="#ffffff"/>
<rect x="706" y="204.5" width="1" height="1" fill="#ffffff"/>
<polyline points="706.5,208.5 706.5,214" fill="none" stroke="#ffffff" stroke-width="1"/>
<rect x="730" y="195" width="8.5" height="2" fill="#00ffff"/>
<rect x="730" y="201" width="8.5" height="2" fill="#00ffff"/>
<rect x="726" y="198" width="19" height="2" fill="#ffff00"/>
<rect x="743" y="198" width="2" height="6" fill="#ffff00"/>
<rect x="734" y="192" width="1" height="1" fill="#ffffff"/>
<rect x="734" y="194" width="1" height="1" fill="#ffffff"/>
<rect x="734" y="204.5" width="1" height="1" fill="#ffffff"/>
<polyline points="734.5,208.5 734.5,214" fill="none" stroke="#ffffff" stroke-width="1"/>
<polyline points="529.5,191 529.5,212" fill="none" stroke="#ffffff" stroke-width="1"/>
<rect x="526.75" y="194.5" width="5.5" height="3.5" fill="#00e0e8" stroke="#000000" stroke-width="1"/>
<polyline points="763.5,191 763.5,212" fill="none" stroke="#ffffff" stroke-width="1"/>
<rect x="760.75" y="194.5" width="5.5" height="3.5" fill="#00e0e8" stroke="#000000" stroke-width="1"/>
<polygon points="183.06,65.3 192.83,65.3 198.7,71.16 198.7,89.6 190.39,89.6 190.39,84.82 185.5,84.82 185.5,89.6 177.78,89.6 177.78,84.82 172.5,84.82 178.17,76.03 178.17,71.4" fill="#00ffff" stroke="#000000" stroke-width="1" shape-rendering="geometricPrecision"/>
<polyline points="183.5,89.5 183.5,114.5" fill="none" stroke="#00ffff" stroke-width="1"/>
<polyline points="192.5,89.5 192.5,114.5" fill="none" stroke="#00ffff" stroke-width="1"/>
<polyline points="183.5,91.5 178.5,97 183.5,98" fill="none" stroke="#00ffff" stroke-width="1" shape-rendering="geometricPrecision"/>
<polyline points="181,94.5 181,97.5" fill="none" stroke="#00ffff" stroke-width="0.7" shape-rendering="geometricPrecision"/>
<polyline points="192.5,93 198,94 195,99.5 192.5,99.5" fill="none" stroke="#00ffff" stroke-width="1" shape-rendering="geometricPrecision"/>
<polyline points="183.5,103 178.5,108.5 183.5,109.5" fill="none" stroke="#00ffff" stroke-width="1" shape-rendering="geometricPrecision"/>
<polyline points="181,106 181,109" fill="none" stroke="#00ffff" stroke-width="0.7" shape-rendering="geometricPrecision"/>
<polyline points="192.5,104.5 198,105.5 195,111 192.5,111" fill="none" stroke="#00ffff" stroke-width="1" shape-rendering="geometricPrecision"/>
<polyline points="181,114 183.5,114" fill="none" stroke="#00ffff" stroke-width="1"/>
<polyline points="192.5,114 195,114" fill="none" stroke="#00ffff" stroke-width="1"/>
<polygon points="278.14,65.3 268.37,65.3 262.5,71.16 262.5,89.6 270.81,89.6 270.81,84.82 275.7,84.82 275.7,89.6 283.42,89.6 283.42,84.82 288.7,84.82 283.03,76.03 283.03,71.4" fill="#00ffff" stroke="#000000" stroke-width="1" shape-rendering="geometricPrecision"/>
<polyline points="268.7,89.5 268.7,114.5" fill="none" stroke="#00ffff" stroke-width="1"/>
<polyline points="277.7,89.5 277.7,114.5" fill="none" stroke="#00ffff" stroke-width="1"/>
<polyline points="277.7,91.5 282.7,97 277.7,98" fill="none" stroke="#00ffff" stroke-width="1" shape-rendering="geometricPrecision"/>
<polyline points="280.2,94.5 280.2,97.5" fill="none" stroke="#00ffff" stroke-width="0.7" shape-rendering="geometricPrecision"/>
<polyline points="268.7,93 263.2,94 266.2,99.5 268.7,99.5" fill="none" stroke="#00ffff" stroke-width="1" shape-rendering="geometricPrecision"/>
<polyline points="277.7,103 282.7,108.5 277.7,109.5" fill="none" stroke="#00ffff" stroke-width="1" shape-rendering="geometricPrecision"/>
<polyline points="280.2,106 280.2,109" fill="none" stroke="#00ffff" stroke-width="0.7" shape-rendering="geometricPrecision"/>
<polyline points="268.7,104.5 263.2,105.5 266.2,111 268.7,111" fill="none" stroke="#00ffff" stroke-width="1" shape-rendering="geometricPrecision"/>
<polyline points="266.2,114 268.7,114" fill="none" stroke="#00ffff" stroke-width="1"/>
<polyline points="277.7,114 280.2,114" fill="none" stroke="#00ffff" stroke-width="1"/>
<polygon points="391.06,65.3 400.83,65.3 406.7,71.16 406.7,89.6 398.39,89.6 398.39,84.82 393.5,84.82 393.5,89.6 385.78,89.6 385.78,84.82 380.5,84.82 386.17,76.03 386.17,71.4" fill="#00ffff" stroke="#000000" stroke-width="1" shape-rendering="geometricPrecision"/>
<polyline points="391.5,89.5 391.5,114.5" fill="none" stroke="#00ffff" stroke-width="1"/>
<polyline points="400.5,89.5 400.5,114.5" fill="none" stroke="#00ffff" stroke-width="1"/>
<polyline points="391.5,91.5 386.5,97 391.5,98" fill="none" stroke="#00ffff" stroke-width="1" shape-rendering="geometricPrecision"/>
<polyline points="389,94.5 389,97.5" fill="none" stroke="#00ffff" stroke-width="0.7" shape-rendering="geometricPrecision"/>
<polyline points="400.5,93 406,94 403,99.5 400.5,99.5" fill="none" stroke="#00ffff" stroke-width="1" shape-rendering="geometricPrecision"/>
<polyline points="391.5,103 386.5,108.5 391.5,109.5" fill="none" stroke="#00ffff" stroke-width="1" shape-rendering="geometricPrecision"/>
<polyline points="389,106 389,109" fill="none" stroke="#00ffff" stroke-width="0.7" shape-rendering="geometricPrecision"/>
<polyline points="400.5,104.5 406,105.5 403,111 400.5,111" fill="none" stroke="#00ffff" stroke-width="1" shape-rendering="geometricPrecision"/>
<polyline points="389,114 391.5,114" fill="none" stroke="#00ffff" stroke-width="1"/>
<polyline points="400.5,114 403,114" fill="none" stroke="#00ffff" stroke-width="1"/>
<polygon points="632.06,65.3 641.83,65.3 647.7,71.16 647.7,89.6 639.39,89.6 639.39,84.82 634.5,84.82 634.5,89.6 626.78,89.6 626.78,84.82 621.5,84.82 627.17,76.03 627.17,71.4" fill="#00ffff" stroke="#000000" stroke-width="1" shape-rendering="geometricPrecision"/>
<polyline points="632.5,89.5 632.5,114.5" fill="none" stroke="#00ffff" stroke-width="1"/>
<polyline points="641.5,89.5 641.5,114.5" fill="none" stroke="#00ffff" stroke-width="1"/>
<polyline points="632.5,91.5 627.5,97 632.5,98" fill="none" stroke="#00ffff" stroke-width="1" shape-rendering="geometricPrecision"/>
<polyline points="630,94.5 630,97.5" fill="none" stroke="#00ffff" stroke-width="0.7" shape-rendering="geometricPrecision"/>
<polyline points="641.5,93 647,94 644,99.5 641.5,99.5" fill="none" stroke="#00ffff" stroke-width="1" shape-rendering="geometricPrecision"/>
<polyline points="632.5,103 627.5,108.5 632.5,109.5" fill="none" stroke="#00ffff" stroke-width="1" shape-rendering="geometricPrecision"/>
<polyline points="630,106 630,109" fill="none" stroke="#00ffff" stroke-width="0.7" shape-rendering="geometricPrecision"/>
<polyline points="641.5,104.5 647,105.5 644,111 641.5,111" fill="none" stroke="#00ffff" stroke-width="1" shape-rendering="geometricPrecision"/>
<polyline points="630,114 632.5,114" fill="none" stroke="#00ffff" stroke-width="1"/>
<polyline points="641.5,114 644,114" fill="none" stroke="#00ffff" stroke-width="1"/>
<polygon points="803.06,65.3 812.83,65.3 818.7,71.16 818.7,89.6 810.39,89.6 810.39,84.82 805.5,84.82 805.5,89.6 797.78,89.6 797.78,84.82 792.5,84.82 798.17,76.03 798.17,71.4" fill="#00ffff" stroke="#000000" stroke-width="1" shape-rendering="geometricPrecision"/>
<polyline points="803.5,89.5 803.5,114.5" fill="none" stroke="#00ffff" stroke-width="1"/>
<polyline points="812.5,89.5 812.5,114.5" fill="none" stroke="#00ffff" stroke-width="1"/>
<polyline points="803.5,91.5 798.5,97 803.5,98" fill="none" stroke="#00ffff" stroke-width="1" shape-rendering="geometricPrecision"/>
<polyline points="801,94.5 801,97.5" fill="none" stroke="#00ffff" stroke-width="0.7" shape-rendering="geometricPrecision"/>
<polyline points="812.5,93 818,94 815,99.5 812.5,99.5" fill="none" stroke="#00ffff" stroke-width="1" shape-rendering="geometricPrecision"/>
<polyline points="803.5,103 798.5,108.5 803.5,109.5" fill="none" stroke="#00ffff" stroke-width="1" shape-rendering="geometricPrecision"/>
<polyline points="801,106 801,109" fill="none" stroke="#00ffff" stroke-width="0.7" shape-rendering="geometricPrecision"/>
<polyline points="812.5,104.5 818,105.5 815,111 812.5,111" fill="none" stroke="#00ffff" stroke-width="1" shape-rendering="geometricPrecision"/>
<polyline points="801,114 803.5,114" fill="none" stroke="#00ffff" stroke-width="1"/>
<polyline points="812.5,114 815,114" fill="none" stroke="#00ffff" stroke-width="1"/>
<polygon points="891.34,65.3 881.57,65.3 875.7,71.16 875.7,89.6 884.01,89.6 884.01,84.82 888.9,84.82 888.9,89.6 896.62,89.6 896.62,84.82 901.9,84.82 896.23,76.03 896.23,71.4" fill="#00ffff" stroke="#000000" stroke-width="1" shape-rendering="geometricPrecision"/>
<polyline points="881.9,89.5 881.9,114.5" fill="none" stroke="#00ffff" stroke-width="1"/>
<polyline points="890.9,89.5 890.9,114.5" fill="none" stroke="#00ffff" stroke-width="1"/>
<polyline points="890.9,91.5 895.9,97 890.9,98" fill="none" stroke="#00ffff" stroke-width="1" shape-rendering="geometricPrecision"/>
<polyline points="893.4,94.5 893.4,97.5" fill="none" stroke="#00ffff" stroke-width="0.7" shape-rendering="geometricPrecision"/>
<polyline points="881.9,93 876.4,94 879.4,99.5 881.9,99.5" fill="none" stroke="#00ffff" stroke-width="1" shape-rendering="geometricPrecision"/>
<polyline points="890.9,103 895.9,108.5 890.9,109.5" fill="none" stroke="#00ffff" stroke-width="1" shape-rendering="geometricPrecision"/>
<polyline points="893.4,106 893.4,109" fill="none" stroke="#00ffff" stroke-width="0.7" shape-rendering="geometricPrecision"/>
<polyline points="881.9,104.5 876.4,105.5 879.4,111 881.9,111" fill="none" stroke="#00ffff" stroke-width="1" shape-rendering="geometricPrecision"/>
<polyline points="879.4,114 881.9,114" fill="none" stroke="#00ffff" stroke-width="1"/>
<polyline points="890.9,114 893.4,114" fill="none" stroke="#00ffff" stroke-width="1"/>
<polygon points="43.34,486.6 33.57,486.6 27.7,492.46 27.7,510.9 36.01,510.9 36.01,506.12 40.9,506.12 40.9,510.9 48.62,510.9 48.62,506.12 53.9,506.12 48.23,497.33 48.23,492.7" fill="#00ffff" stroke="#000000" stroke-width="1" shape-rendering="geometricPrecision"/>
<polyline points="33.9,510.8 33.9,535.8" fill="none" stroke="#00ffff" stroke-width="1"/>
<polyline points="42.9,510.8 42.9,535.8" fill="none" stroke="#00ffff" stroke-width="1"/>
<polyline points="42.9,512.8 47.9,518.3 42.9,519.3" fill="none" stroke="#00ffff" stroke-width="1" shape-rendering="geometricPrecision"/>
<polyline points="45.4,515.8 45.4,518.8" fill="none" stroke="#00ffff" stroke-width="0.7" shape-rendering="geometricPrecision"/>
<polyline points="33.9,514.3 28.4,515.3 31.4,520.8 33.9,520.8" fill="none" stroke="#00ffff" stroke-width="1" shape-rendering="geometricPrecision"/>
<polyline points="42.9,524.3 47.9,529.8 42.9,530.8" fill="none" stroke="#00ffff" stroke-width="1" shape-rendering="geometricPrecision"/>
<polyline points="45.4,527.3 45.4,530.3" fill="none" stroke="#00ffff" stroke-width="0.7" shape-rendering="geometricPrecision"/>
<polyline points="33.9,525.8 28.4,526.8 31.4,532.3 33.9,532.3" fill="none" stroke="#00ffff" stroke-width="1" shape-rendering="geometricPrecision"/>
<polyline points="31.4,535.3 33.9,535.3" fill="none" stroke="#00ffff" stroke-width="1"/>
<polyline points="42.9,535.3 45.4,535.3" fill="none" stroke="#00ffff" stroke-width="1"/>
<polygon points="567.34,415.3 557.57,415.3 551.7,421.16 551.7,439.6 560.01,439.6 560.01,434.82 564.9,434.82 564.9,439.6 572.62,439.6 572.62,434.82 577.9,434.82 572.23,426.03 572.23,421.4" fill="#00ffff" stroke="#000000" stroke-width="1" shape-rendering="geometricPrecision"/>
<polyline points="557.9,439.5 557.9,464.5" fill="none" stroke="#00ffff" stroke-width="1"/>
<polyline points="566.9,439.5 566.9,464.5" fill="none" stroke="#00ffff" stroke-width="1"/>
<polyline points="566.9,441.5 571.9,447 566.9,448" fill="none" stroke="#00ffff" stroke-width="1" shape-rendering="geometricPrecision"/>
<polyline points="569.4,444.5 569.4,447.5" fill="none" stroke="#00ffff" stroke-width="0.7" shape-rendering="geometricPrecision"/>
<polyline points="557.9,443 552.4,444 555.4,449.5 557.9,449.5" fill="none" stroke="#00ffff" stroke-width="1" shape-rendering="geometricPrecision"/>
<polyline points="566.9,453 571.9,458.5 566.9,459.5" fill="none" stroke="#00ffff" stroke-width="1" shape-rendering="geometricPrecision"/>
<polyline points="569.4,456 569.4,459" fill="none" stroke="#00ffff" stroke-width="0.7" shape-rendering="geometricPrecision"/>
<polyline points="557.9,454.5 552.4,455.5 555.4,461 557.9,461" fill="none" stroke="#00ffff" stroke-width="1" shape-rendering="geometricPrecision"/>
<polyline points="555.4,464 557.9,464" fill="none" stroke="#00ffff" stroke-width="1"/>
<polyline points="566.9,464 569.4,464" fill="none" stroke="#00ffff" stroke-width="1"/>
<polyline points="64.4,674.5 64.4,700.5" fill="none" stroke="#00ffff" stroke-width="1"/>
<polyline points="73.1,674.5 73.1,700.5" fill="none" stroke="#00ffff" stroke-width="1"/>
<polyline points="64.4,676.5 59.4,682 64.4,683" fill="none" stroke="#00ffff" stroke-width="1" shape-rendering="geometricPrecision"/>
<polyline points="61.9,679.5 61.9,682.5" fill="none" stroke="#00ffff" stroke-width="0.7" shape-rendering="geometricPrecision"/>
<polyline points="73.1,678 78.6,679 75.6,684.5 73.1,684.5" fill="none" stroke="#00ffff" stroke-width="1" shape-rendering="geometricPrecision"/>
<polyline points="64.4,688 59.4,693.5 64.4,694.5" fill="none" stroke="#00ffff" stroke-width="1" shape-rendering="geometricPrecision"/>
<polyline points="61.9,691 61.9,694" fill="none" stroke="#00ffff" stroke-width="0.7" shape-rendering="geometricPrecision"/>
<polyline points="73.1,689.5 78.6,690.5 75.6,696 73.1,696" fill="none" stroke="#00ffff" stroke-width="1" shape-rendering="geometricPrecision"/>
<polyline points="61.9,700 64.4,700" fill="none" stroke="#00ffff" stroke-width="1"/>
<polyline points="73.1,700 75.6,700" fill="none" stroke="#00ffff" stroke-width="1"/>
<polygon points="58.3,700.6 65.63,700.6 67.48,705.18 71.15,705.18 72.95,700.6 79.45,700.6 79.45,717.86 73.59,724.1 64.45,724.1 58.93,718.59 58.93,712.5 54.05,705.77 58.3,705.18" fill="#00ffff" stroke="#000000" stroke-width="1" shape-rendering="geometricPrecision"/>
<rect x="65.5" y="707.5" width="6" height="3.5" fill="#00ffff" stroke="#000000" stroke-width="1"/>
<circle cx="68.4" cy="716.5" r="3" fill="#00ffff" stroke="#000000" stroke-width="1" shape-rendering="geometricPrecision"/>
<polyline points="183.1,674.5 183.1,700.5" fill="none" stroke="#00ffff" stroke-width="1"/>
<polyline points="191.8,674.5 191.8,700.5" fill="none" stroke="#00ffff" stroke-width="1"/>
<polyline points="183.1,676.5 178.1,682 183.1,683" fill="none" stroke="#00ffff" stroke-width="1" shape-rendering="geometricPrecision"/>
<polyline points="180.6,679.5 180.6,682.5" fill="none" stroke="#00ffff" stroke-width="0.7" shape-rendering="geometricPrecision"/>
<polyline points="191.8,678 197.3,679 194.3,684.5 191.8,684.5" fill="none" stroke="#00ffff" stroke-width="1" shape-rendering="geometricPrecision"/>
<polyline points="183.1,688 178.1,693.5 183.1,694.5" fill="none" stroke="#00ffff" stroke-width="1" shape-rendering="geometricPrecision"/>
<polyline points="180.6,691 180.6,694" fill="none" stroke="#00ffff" stroke-width="0.7" shape-rendering="geometricPrecision"/>
<polyline points="191.8,689.5 197.3,690.5 194.3,696 191.8,696" fill="none" stroke="#00ffff" stroke-width="1" shape-rendering="geometricPrecision"/>
<polyline points="180.6,700 183.1,700" fill="none" stroke="#00ffff" stroke-width="1"/>
<polyline points="191.8,700 194.3,700" fill="none" stroke="#00ffff" stroke-width="1"/>
<polygon points="177,700.6 184.33,700.6 186.18,705.18 189.85,705.18 191.65,700.6 198.15,700.6 198.15,717.86 192.29,724.1 183.15,724.1 177.63,718.59 177.63,712.5 172.75,705.77 177,705.18" fill="#00ffff" stroke="#000000" stroke-width="1" shape-rendering="geometricPrecision"/>
<rect x="184.2" y="707.5" width="6" height="3.5" fill="#00ffff" stroke="#000000" stroke-width="1"/>
<circle cx="187.1" cy="716.5" r="3" fill="#00ffff" stroke="#000000" stroke-width="1" shape-rendering="geometricPrecision"/>
<polyline points="268.1,674.5 268.1,700.5" fill="none" stroke="#00ffff" stroke-width="1"/>
<polyline points="276.8,674.5 276.8,700.5" fill="none" stroke="#00ffff" stroke-width="1"/>
<polyline points="268.1,676.5 263.1,682 268.1,683" fill="none" stroke="#00ffff" stroke-width="1" shape-rendering="geometricPrecision"/>
<polyline points="265.6,679.5 265.6,682.5" fill="none" stroke="#00ffff" stroke-width="0.7" shape-rendering="geometricPrecision"/>
<polyline points="276.8,678 282.3,679 279.3,684.5 276.8,684.5" fill="none" stroke="#00ffff" stroke-width="1" shape-rendering="geometricPrecision"/>
<polyline points="268.1,688 263.1,693.5 268.1,694.5" fill="none" stroke="#00ffff" stroke-width="1" shape-rendering="geometricPrecision"/>
<polyline points="265.6,691 265.6,694" fill="none" stroke="#00ffff" stroke-width="0.7" shape-rendering="geometricPrecision"/>
<polyline points="276.8,689.5 282.3,690.5 279.3,696 276.8,696" fill="none" stroke="#00ffff" stroke-width="1" shape-rendering="geometricPrecision"/>
<polyline points="265.6,700 268.1,700" fill="none" stroke="#00ffff" stroke-width="1"/>
<polyline points="276.8,700 279.3,700" fill="none" stroke="#00ffff" stroke-width="1"/>
<polygon points="262,700.6 269.33,700.6 271.18,705.18 274.85,705.18 276.65,700.6 283.15,700.6 283.15,717.86 277.29,724.1 268.15,724.1 262.63,718.59 262.63,712.5 257.75,705.77 262,705.18" fill="#00ffff" stroke="#000000" stroke-width="1" shape-rendering="geometricPrecision"/>
<rect x="269.2" y="707.5" width="6" height="3.5" fill="#00ffff" stroke="#000000" stroke-width="1"/>
<circle cx="272.1" cy="716.5" r="3" fill="#00ffff" stroke="#000000" stroke-width="1" shape-rendering="geometricPrecision"/>
<polyline points="556.9,674.5 556.9,700.5" fill="none" stroke="#00ffff" stroke-width="1"/>
<polyline points="565.6,674.5 565.6,700.5" fill="none" stroke="#00ffff" stroke-width="1"/>
<polyline points="556.9,676.5 551.9,682 556.9,683" fill="none" stroke="#00ffff" stroke-width="1" shape-rendering="geometricPrecision"/>
<polyline points="554.4,679.5 554.4,682.5" fill="none" stroke="#00ffff" stroke-width="0.7" shape-rendering="geometricPrecision"/>
<polyline points="565.6,678 571.1,679 568.1,684.5 565.6,684.5" fill="none" stroke="#00ffff" stroke-width="1" shape-rendering="geometricPrecision"/>
<polyline points="556.9,688 551.9,693.5 556.9,694.5" fill="none" stroke="#00ffff" stroke-width="1" shape-rendering="geometricPrecision"/>
<polyline points="554.4,691 554.4,694" fill="none" stroke="#00ffff" stroke-width="0.7" shape-rendering="geometricPrecision"/>
<polyline points="565.6,689.5 571.1,690.5 568.1,696 565.6,696" fill="none" stroke="#00ffff" stroke-width="1" shape-rendering="geometricPrecision"/>
<polyline points="554.4,700 556.9,700" fill="none" stroke="#00ffff" stroke-width="1"/>
<polyline points="565.6,700 568.1,700" fill="none" stroke="#00ffff" stroke-width="1"/>
<polygon points="550.8,700.6 558.13,700.6 559.98,705.18 563.65,705.18 565.45,700.6 571.95,700.6 571.95,717.86 566.09,724.1 556.95,724.1 551.43,718.59 551.43,712.5 546.55,705.77 550.8,705.18" fill="#00ffff" stroke="#000000" stroke-width="1" shape-rendering="geometricPrecision"/>
<rect x="558" y="707.5" width="6" height="3.5" fill="#00ffff" stroke="#000000" stroke-width="1"/>
<circle cx="560.9" cy="716.5" r="3" fill="#00ffff" stroke="#000000" stroke-width="1" shape-rendering="geometricPrecision"/>
<polyline points="631.9,674.5 631.9,700.5" fill="none" stroke="#00ffff" stroke-width="1"/>
<polyline points="640.6,674.5 640.6,700.5" fill="none" stroke="#00ffff" stroke-width="1"/>
<polyline points="631.9,676.5 626.9,682 631.9,683" fill="none" stroke="#00ffff" stroke-width="1" shape-rendering="geometricPrecision"/>
<polyline points="629.4,679.5 629.4,682.5" fill="none" stroke="#00ffff" stroke-width="0.7" shape-rendering="geometricPrecision"/>
<polyline points="640.6,678 646.1,679 643.1,684.5 640.6,684.5" fill="none" stroke="#00ffff" stroke-width="1" shape-rendering="geometricPrecision"/>
<polyline points="631.9,688 626.9,693.5 631.9,694.5" fill="none" stroke="#00ffff" stroke-width="1" shape-rendering="geometricPrecision"/>
<polyline points="629.4,691 629.4,694" fill="none" stroke="#00ffff" stroke-width="0.7" shape-rendering="geometricPrecision"/>
<polyline points="640.6,689.5 646.1,690.5 643.1,696 640.6,696" fill="none" stroke="#00ffff" stroke-width="1" shape-rendering="geometricPrecision"/>
<polyline points="629.4,700 631.9,700" fill="none" stroke="#00ffff" stroke-width="1"/>
<polyline points="640.6,700 643.1,700" fill="none" stroke="#00ffff" stroke-width="1"/>
<polygon points="625.8,700.6 633.13,700.6 634.98,705.18 638.65,705.18 640.45,700.6 646.95,700.6 646.95,717.86 641.09,724.1 631.95,724.1 626.43,718.59 626.43,712.5 621.55,705.77 625.8,705.18" fill="#00ffff" stroke="#000000" stroke-width="1" shape-rendering="geometricPrecision"/>
<rect x="633" y="707.5" width="6" height="3.5" fill="#00ffff" stroke="#000000" stroke-width="1"/>
<circle cx="635.9" cy="716.5" r="3" fill="#00ffff" stroke="#000000" stroke-width="1" shape-rendering="geometricPrecision"/>
<polyline points="816.9,674.5 816.9,700.5" fill="none" stroke="#00ffff" stroke-width="1"/>
<polyline points="825.6,674.5 825.6,700.5" fill="none" stroke="#00ffff" stroke-width="1"/>
<polyline points="816.9,676.5 811.9,682 816.9,683" fill="none" stroke="#00ffff" stroke-width="1" shape-rendering="geometricPrecision"/>
<polyline points="814.4,679.5 814.4,682.5" fill="none" stroke="#00ffff" stroke-width="0.7" shape-rendering="geometricPrecision"/>
<polyline points="825.6,678 831.1,679 828.1,684.5 825.6,684.5" fill="none" stroke="#00ffff" stroke-width="1" shape-rendering="geometricPrecision"/>
<polyline points="816.9,688 811.9,693.5 816.9,694.5" fill="none" stroke="#00ffff" stroke-width="1" shape-rendering="geometricPrecision"/>
<polyline points="814.4,691 814.4,694" fill="none" stroke="#00ffff" stroke-width="0.7" shape-rendering="geometricPrecision"/>
<polyline points="825.6,689.5 831.1,690.5 828.1,696 825.6,696" fill="none" stroke="#00ffff" stroke-width="1" shape-rendering="geometricPrecision"/>
<polyline points="814.4,700 816.9,700" fill="none" stroke="#00ffff" stroke-width="1"/>
<polyline points="825.6,700 828.1,700" fill="none" stroke="#00ffff" stroke-width="1"/>
<polygon points="810.8,700.6 818.13,700.6 819.98,705.18 823.65,705.18 825.45,700.6 831.95,700.6 831.95,717.86 826.09,724.1 816.95,724.1 811.43,718.59 811.43,712.5 806.55,705.77 810.8,705.18" fill="#00ffff" stroke="#000000" stroke-width="1" shape-rendering="geometricPrecision"/>
<rect x="818" y="707.5" width="6" height="3.5" fill="#00ffff" stroke="#000000" stroke-width="1"/>
<circle cx="820.9" cy="716.5" r="3" fill="#00ffff" stroke="#000000" stroke-width="1" shape-rendering="geometricPrecision"/>
<polyline points="391.1,421.2 391.1,447.2" fill="none" stroke="#00ffff" stroke-width="1"/>
<polyline points="399.8,421.2 399.8,447.2" fill="none" stroke="#00ffff" stroke-width="1"/>
<polyline points="391.1,423.2 386.1,428.7 391.1,429.7" fill="none" stroke="#00ffff" stroke-width="1" shape-rendering="geometricPrecision"/>
<polyline points="388.6,426.2 388.6,429.2" fill="none" stroke="#00ffff" stroke-width="0.7" shape-rendering="geometricPrecision"/>
<polyline points="399.8,424.7 405.3,425.7 402.3,431.2 399.8,431.2" fill="none" stroke="#00ffff" stroke-width="1" shape-rendering="geometricPrecision"/>
<polyline points="391.1,434.7 386.1,440.2 391.1,441.2" fill="none" stroke="#00ffff" stroke-width="1" shape-rendering="geometricPrecision"/>
<polyline points="388.6,437.7 388.6,440.7" fill="none" stroke="#00ffff" stroke-width="0.7" shape-rendering="geometricPrecision"/>
<polyline points="399.8,436.2 405.3,437.2 402.3,442.7 399.8,442.7" fill="none" stroke="#00ffff" stroke-width="1" shape-rendering="geometricPrecision"/>
<polyline points="388.6,446.7 391.1,446.7" fill="none" stroke="#00ffff" stroke-width="1"/>
<polyline points="399.8,446.7 402.3,446.7" fill="none" stroke="#00ffff" stroke-width="1"/>
<polygon points="385,447.3 392.33,447.3 394.18,451.88 397.85,451.88 399.65,447.3 406.15,447.3 406.15,464.56 400.29,470.8 391.15,470.8 385.63,465.29 385.63,459.2 380.75,452.47 385,451.88" fill="#00ffff" stroke="#000000" stroke-width="1" shape-rendering="geometricPrecision"/>
<rect x="392.2" y="454.2" width="6" height="3.5" fill="#00ffff" stroke="#000000" stroke-width="1"/>
<circle cx="395.1" cy="463.2" r="3" fill="#00ffff" stroke="#000000" stroke-width="1" shape-rendering="geometricPrecision"/>
<polyline points="874.6,335.5 874.6,361.5" fill="none" stroke="#00ffff" stroke-width="1"/>
<polyline points="883.3,335.5 883.3,361.5" fill="none" stroke="#00ffff" stroke-width="1"/>
<polyline points="874.6,337.5 869.6,343 874.6,344" fill="none" stroke="#00ffff" stroke-width="1" shape-rendering="geometricPrecision"/>
<polyline points="872.1,340.5 872.1,343.5" fill="none" stroke="#00ffff" stroke-width="0.7" shape-rendering="geometricPrecision"/>
<polyline points="883.3,339 888.8,340 885.8,345.5 883.3,345.5" fill="none" stroke="#00ffff" stroke-width="1" shape-rendering="geometricPrecision"/>
<polyline points="874.6,349 869.6,354.5 874.6,355.5" fill="none" stroke="#00ffff" stroke-width="1" shape-rendering="geometricPrecision"/>
<polyline points="872.1,352 872.1,355" fill="none" stroke="#00ffff" stroke-width="0.7" shape-rendering="geometricPrecision"/>
<polyline points="883.3,350.5 888.8,351.5 885.8,357 883.3,357" fill="none" stroke="#00ffff" stroke-width="1" shape-rendering="geometricPrecision"/>
<polyline points="872.1,361 874.6,361" fill="none" stroke="#00ffff" stroke-width="1"/>
<polyline points="883.3,361 885.8,361" fill="none" stroke="#00ffff" stroke-width="1"/>
<polygon points="868.5,361.6 875.83,361.6 877.68,366.18 881.35,366.18 883.15,361.6 889.65,361.6 889.65,378.86 883.79,385.1 874.65,385.1 869.13,379.59 869.13,373.5 864.25,366.77 868.5,366.18" fill="#00ffff" stroke="#000000" stroke-width="1" shape-rendering="geometricPrecision"/>
<rect x="875.7" y="368.5" width="6" height="3.5" fill="#00ffff" stroke="#000000" stroke-width="1"/>
<circle cx="878.6" cy="377.5" r="3" fill="#00ffff" stroke="#000000" stroke-width="1" shape-rendering="geometricPrecision"/>
<rect x="44.5" y="178.12" width="5.62" height="2.75" fill="#000000" stroke="#000000" stroke-width="1"/>
<polygon points="43.88,180.88 50.12,180.88 50.12,187.25 42.62,187.25 42.62,185.62 43.88,185" fill="#00ffff" stroke="#000000" stroke-width="1" shape-rendering="geometricPrecision"/>
<rect x="45.5" y="189.38" width="4.62" height="3.12" fill="#00ffff" stroke="#000000" stroke-width="1"/>
<polygon points="61,163.12 91.38,168.75 91.38,187.5 61,187.5" fill="#00ffff" stroke="#000000" stroke-width="1" shape-rendering="geometricPrecision"/>
<rect x="64.75" y="162.25" width="4.12" height="2.12" fill="#000000" stroke="#000000" stroke-width="1"/>
<rect x="83" y="165" width="4" height="2.25" fill="#000000" stroke="#000000" stroke-width="1"/>
<rect x="62.62" y="187.88" width="20.62" height="2.5" fill="#00ffff" stroke="#000000" stroke-width="1"/>
<rect x="86.75" y="187.88" width="2.75" height="2.5" fill="#00ffff" stroke="#000000" stroke-width="1"/>
<rect x="53.25" y="151.25" width="5.25" height="4" fill="#00ffff" stroke="#000000" stroke-width="1"/>
<polygon points="50.12,155.25 63.88,155.25 61,162.5 61,207.5 50.12,207.5" fill="#00ffff" stroke="#000000" stroke-width="1" shape-rendering="geometricPrecision"/>
<rect x="92.38" y="151.25" width="7.5" height="4" fill="#00ffff" stroke="#000000" stroke-width="1"/>
<polyline points="92.38,153.12 99.88,153.12" fill="none" stroke="#000000" stroke-width="1" shape-rendering="geometricPrecision"/>
<rect x="88.5" y="196.88" width="2.88" height="7.5" fill="#00ffff" stroke="#000000" stroke-width="1"/>
<rect x="91.38" y="155" width="9.12" height="52.5" fill="#00ffff" stroke="#000000" stroke-width="1"/>
<polyline points="91.38,201.62 100.5,201.62" fill="none" stroke="#000000" stroke-width="1" shape-rendering="geometricPrecision"/>
<rect x="88.88" y="174.38" width="5.25" height="8.75" fill="#00ffff" stroke="#000000" stroke-width="1"/>
<rect x="90.25" y="176" width="2.75" height="5.5" fill="#00ffff" stroke="#000000" stroke-width="1"/>
<rect x="102.5" y="151.38" width="3" height="7.12" fill="#00ffff" stroke="#000000" stroke-width="1"/>
<polygon points="105.5,153.25 113.5,153.25 113.5,207.12 109.38,207.12 109.38,156 105.5,156" fill="#00ffff" stroke="#000000" stroke-width="1" shape-rendering="geometricPrecision"/>
<rect x="104.62" y="156" width="1.75" height="23" fill="#00ffff" stroke="#000000" stroke-width="1"/>
<polygon points="101.5,181.5 103.5,179.25 109.38,179.25 109.38,182.62 101.5,182.62" fill="#00ffff" stroke="#000000" stroke-width="1" shape-rendering="geometricPrecision"/>
<polyline points="101.5,183.75 106,185.75 101.75,187.75 106,189.75 101.75,191.75 106,193.75 101.75,195.75 106,197.75 101.75,199.5" fill="none" stroke="#000000" stroke-width="1.3" shape-rendering="geometricPrecision"/>
<rect x="106.88" y="182.62" width="1.25" height="22.62" fill="#00ffff" stroke="#000000" stroke-width="1"/>
<rect x="101.12" y="205.12" width="12" height="2" fill="#00ffff" stroke="#000000" stroke-width="1"/>
<rect x="113.62" y="158" width="2" height="3.38" fill="#000000" stroke="#000000" stroke-width="1"/>
<rect x="113.62" y="193.88" width="2" height="3.75" fill="#000000" stroke="#000000" stroke-width="1"/>
<path d="M116.4,207.5 v-15 h10 v-8.5 a7.8,7.8 0 0 1 15.6,0 v23.5 z" fill="#00ffff" stroke="#000000" stroke-width="1" shape-rendering="geometricPrecision"/>
<circle cx="133.9" cy="184.75" r="1.3" fill="#00ffff" stroke="#000000" stroke-width="1" shape-rendering="geometricPrecision"/>
<rect x="129.5" y="215.4" width="10" height="5.6" fill="#00ffff" stroke="#000000" stroke-width="1"/>
<polygon points="127,221.9 142,221.9 150.8,229 150.8,231.2 118.2,231.2 118.2,229" fill="#00ffff" stroke="#000000" stroke-width="1" shape-rendering="geometricPrecision"/>
<polyline points="118.2,229 150.8,229" fill="none" stroke="#000000" stroke-width="1"/>
<polyline points="128.5,222.4 128,229" fill="none" stroke="#000000" stroke-width="1" shape-rendering="geometricPrecision"/>
<polyline points="137,222.4 139.5,229" fill="none" stroke="#000000" stroke-width="1" shape-rendering="geometricPrecision"/>
<circle cx="131.3" cy="226" r="2" fill="#00ffff" stroke="#000000" stroke-width="1" shape-rendering="geometricPrecision"/>
<rect x="226" y="240.62" width="5" height="8.12" fill="#00ffff" stroke="#000000" stroke-width="1"/>
<polyline points="226,243.12 231,243.12" fill="none" stroke="#000000" stroke-width="1" shape-rendering="geometricPrecision"/>
<polyline points="226,245.25 231,245.25" fill="none" stroke="#000000" stroke-width="1" shape-rendering="geometricPrecision"/>
<polyline points="226,247.25 231,247.25" fill="none" stroke="#000000" stroke-width="1" shape-rendering="geometricPrecision"/>
<rect x="224.5" y="248.75" width="7.75" height="6.88" fill="#00ffff" stroke="#000000" stroke-width="1"/>
<polygon points="222,256.25 256.38,256.25 276.38,271.25 272,288.12 280.12,288.12 280.12,297.5 221.38,297.5 221.38,266.25 222,265" fill="#00ffff" stroke="#000000" stroke-width="1" shape-rendering="geometricPrecision"/>
<rect x="238.88" y="238.12" width="17.5" height="18.12" fill="#00ffff" stroke="#000000" stroke-width="1"/>
<polyline points="240.5,242 246,242" fill="none" stroke="#000000" stroke-width="0.75" shape-rendering="geometricPrecision"/>
<polyline points="249.25,242 255.12,242" fill="none" stroke="#000000" stroke-width="0.75" shape-rendering="geometricPrecision"/>
<polyline points="240.5,243.45 246,243.45" fill="none" stroke="#000000" stroke-width="0.75" shape-rendering="geometricPrecision"/>
<polyline points="249.25,243.45 255.12,243.45" fill="none" stroke="#000000" stroke-width="0.75" shape-rendering="geometricPrecision"/>
<polyline points="240.5,244.9 246,244.9" fill="none" stroke="#000000" stroke-width="0.75" shape-rendering="geometricPrecision"/>
<polyline points="249.25,244.9 255.12,244.9" fill="none" stroke="#000000" stroke-width="0.75" shape-rendering="geometricPrecision"/>
<polyline points="240.5,246.35 246,246.35" fill="none" stroke="#000000" stroke-width="0.75" shape-rendering="geometricPrecision"/>
<polyline points="249.25,246.35 255.12,246.35" fill="none" stroke="#000000" stroke-width="0.75" shape-rendering="geometricPrecision"/>
<polyline points="240.5,247.8 246,247.8" fill="none" stroke="#000000" stroke-width="0.75" shape-rendering="geometricPrecision"/>
<polyline points="249.25,247.8 255.12,247.8" fill="none" stroke="#000000" stroke-width="0.75" shape-rendering="geometricPrecision"/>
<polyline points="240.5,249.25 246,249.25" fill="none" stroke="#000000" stroke-width="0.75" shape-rendering="geometricPrecision"/>
<polyline points="249.25,249.25 255.12,249.25" fill="none" stroke="#000000" stroke-width="0.75" shape-rendering="geometricPrecision"/>
<polyline points="240.5,250.7 246,250.7" fill="none" stroke="#000000" stroke-width="0.75" shape-rendering="geometricPrecision"/>
<polyline points="249.25,250.7 255.12,250.7" fill="none" stroke="#000000" stroke-width="0.75" shape-rendering="geometricPrecision"/>
<polyline points="240.5,252.15 246,252.15" fill="none" stroke="#000000" stroke-width="0.75" shape-rendering="geometricPrecision"/>
<polyline points="249.25,252.15 255.12,252.15" fill="none" stroke="#000000" stroke-width="0.75" shape-rendering="geometricPrecision"/>
<polyline points="240.5,253.6 246,253.6" fill="none" stroke="#000000" stroke-width="0.75" shape-rendering="geometricPrecision"/>
<polyline points="249.25,253.6 255.12,253.6" fill="none" stroke="#000000" stroke-width="0.75" shape-rendering="geometricPrecision"/>
<rect x="246.38" y="238.5" width="2.5" height="2.5" fill="#000000"/>
<rect x="246.38" y="241" width="2.5" height="14.62" fill="#00ffff"/>
<polyline points="238.88,241 256.38,241" fill="none" stroke="#000000" stroke-width="1" shape-rendering="geometricPrecision"/>
<rect x="236.38" y="238.12" width="2.12" height="59.38" fill="#00ffff" stroke="#000000" stroke-width="1"/>
<polyline points="222,266.25 236.38,267.5" fill="none" stroke="#000000" stroke-width="1" shape-rendering="geometricPrecision"/>
<polyline points="238.5,259.38 256.38,259.38 230.75,259.38" fill="none" stroke="#000000" stroke-width="1" shape-rendering="geometricPrecision"/>
<polyline points="232.62,259.38 230.12,263.75 236.38,264.75" fill="none" stroke="#000000" stroke-width="1" shape-rendering="geometricPrecision"/>
<polyline points="238.5,264.75 264.5,267.5 256.38,259.38" fill="none" stroke="#000000" stroke-width="1" shape-rendering="geometricPrecision"/>
<polyline points="238.5,270 257,273.12 257,276.88 249.5,276.88 238.5,273.12" fill="none" stroke="#000000" stroke-width="1" shape-rendering="geometricPrecision"/>
<polyline points="229.5,269.38 235.12,269.38 235.12,273.75 232,273.75" fill="none" stroke="#000000" stroke-width="1" shape-rendering="geometricPrecision"/>
<rect x="224.5" y="268.75" width="3.12" height="2.5" fill="#000000"/>
<rect x="260.5" y="271.88" width="2.75" height="2.5" fill="#000000"/>
<polyline points="224.5,276.88 236.38,276.88" fill="none" stroke="#000000" stroke-width="1" shape-rendering="geometricPrecision"/>
<polyline points="238.5,278.12 249.5,278.12 262,288.12" fill="none" stroke="#000000" stroke-width="1.2" shape-rendering="geometricPrecision"/>
<polyline points="267,271.88 262,288.12" fill="none" stroke="#000000" stroke-width="1" shape-rendering="geometricPrecision"/>
<polyline points="270.75,271.88 266,288.12" fill="none" stroke="#000000" stroke-width="1" shape-rendering="geometricPrecision"/>
<polyline points="273.88,272.5 269.75,288.12" fill="none" stroke="#000000" stroke-width="1" shape-rendering="geometricPrecision"/>
<rect x="259.5" y="279.75" width="5.62" height="1.5" fill="#00ffff" stroke="#000000" stroke-width="1"/>
<rect x="265.75" y="280.38" width="5.62" height="1.5" fill="#00ffff" stroke="#000000" stroke-width="1"/>
<polyline points="224.5,276.88 224.5,295.62 262,295.62" fill="none" stroke="#000000" stroke-width="1" shape-rendering="geometricPrecision"/>
<rect x="221.75" y="278.12" width="1.75" height="18.75" fill="#00ffff" stroke="#000000" stroke-width="1"/>
<polyline points="262.62,288.12 262.62,297.5" fill="none" stroke="#000000" stroke-width="1" shape-rendering="geometricPrecision"/>
<polyline points="267.62,288.12 267.62,292.5 270.75,296.88" fill="none" stroke="#000000" stroke-width="1" shape-rendering="geometricPrecision"/>
<rect x="286" y="240.62" width="5" height="8.12" fill="#00ffff" stroke="#000000" stroke-width="1"/>
<polyline points="286,243.12 291,243.12" fill="none" stroke="#000000" stroke-width="1" shape-rendering="geometricPrecision"/>
<polyline points="286,245.25 291,245.25" fill="none" stroke="#000000" stroke-width="1" shape-rendering="geometricPrecision"/>
<polyline points="286,247.25 291,247.25" fill="none" stroke="#000000" stroke-width="1" shape-rendering="geometricPrecision"/>
<rect x="284.5" y="248.75" width="7.75" height="6.88" fill="#00ffff" stroke="#000000" stroke-width="1"/>
<polygon points="282,256.25 316.38,256.25 336.38,271.25 332,288.12 340.12,288.12 340.12,297.5 281.38,297.5 281.38,266.25 282,265" fill="#00ffff" stroke="#000000" stroke-width="1" shape-rendering="geometricPrecision"/>
<rect x="298.88" y="238.12" width="17.5" height="18.12" fill="#00ffff" stroke="#000000" stroke-width="1"/>
<polyline points="300.5,242 306,242" fill="none" stroke="#000000" stroke-width="0.75" shape-rendering="geometricPrecision"/>
<polyline points="309.25,242 315.12,242" fill="none" stroke="#000000" stroke-width="0.75" shape-rendering="geometricPrecision"/>
<polyline points="300.5,243.45 306,243.45" fill="none" stroke="#000000" stroke-width="0.75" shape-rendering="geometricPrecision"/>
<polyline points="309.25,243.45 315.12,243.45" fill="none" stroke="#000000" stroke-width="0.75" shape-rendering="geometricPrecision"/>
<polyline points="300.5,244.9 306,244.9" fill="none" stroke="#000000" stroke-width="0.75" shape-rendering="geometricPrecision"/>
<polyline points="309.25,244.9 315.12,244.9" fill="none" stroke="#000000" stroke-width="0.75" shape-rendering="geometricPrecision"/>
<polyline points="300.5,246.35 306,246.35" fill="none" stroke="#000000" stroke-width="0.75" shape-rendering="geometricPrecision"/>
<polyline points="309.25,246.35 315.12,246.35" fill="none" stroke="#000000" stroke-width="0.75" shape-rendering="geometricPrecision"/>
<polyline points="300.5,247.8 306,247.8" fill="none" stroke="#000000" stroke-width="0.75" shape-rendering="geometricPrecision"/>
<polyline points="309.25,247.8 315.12,247.8" fill="none" stroke="#000000" stroke-width="0.75" shape-rendering="geometricPrecision"/>
<polyline points="300.5,249.25 306,249.25" fill="none" stroke="#000000" stroke-width="0.75" shape-rendering="geometricPrecision"/>
<polyline points="309.25,249.25 315.12,249.25" fill="none" stroke="#000000" stroke-width="0.75" shape-rendering="geometricPrecision"/>
<polyline points="300.5,250.7 306,250.7" fill="none" stroke="#000000" stroke-width="0.75" shape-rendering="geometricPrecision"/>
<polyline points="309.25,250.7 315.12,250.7" fill="none" stroke="#000000" stroke-width="0.75" shape-rendering="geometricPrecision"/>
<polyline points="300.5,252.15 306,252.15" fill="none" stroke="#000000" stroke-width="0.75" shape-rendering="geometricPrecision"/>
<polyline points="309.25,252.15 315.12,252.15" fill="none" stroke="#000000" stroke-width="0.75" shape-rendering="geometricPrecision"/>
<polyline points="300.5,253.6 306,253.6" fill="none" stroke="#000000" stroke-width="0.75" shape-rendering="geometricPrecision"/>
<polyline points="309.25,253.6 315.12,253.6" fill="none" stroke="#000000" stroke-width="0.75" shape-rendering="geometricPrecision"/>
<rect x="306.38" y="238.5" width="2.5" height="2.5" fill="#000000"/>
<rect x="306.38" y="241" width="2.5" height="14.62" fill="#00ffff"/>
<polyline points="298.88,241 316.38,241" fill="none" stroke="#000000" stroke-width="1" shape-rendering="geometricPrecision"/>
<rect x="296.38" y="238.12" width="2.12" height="59.38" fill="#00ffff" stroke="#000000" stroke-width="1"/>
<polyline points="282,266.25 296.38,267.5" fill="none" stroke="#000000" stroke-width="1" shape-rendering="geometricPrecision"/>
<polyline points="298.5,259.38 316.38,259.38 290.75,259.38" fill="none" stroke="#000000" stroke-width="1" shape-rendering="geometricPrecision"/>
<polyline points="292.62,259.38 290.12,263.75 296.38,264.75" fill="none" stroke="#000000" stroke-width="1" shape-rendering="geometricPrecision"/>
<polyline points="298.5,264.75 324.5,267.5 316.38,259.38" fill="none" stroke="#000000" stroke-width="1" shape-rendering="geometricPrecision"/>
<polyline points="298.5,270 317,273.12 317,276.88 309.5,276.88 298.5,273.12" fill="none" stroke="#000000" stroke-width="1" shape-rendering="geometricPrecision"/>
<polyline points="289.5,269.38 295.12,269.38 295.12,273.75 292,273.75" fill="none" stroke="#000000" stroke-width="1" shape-rendering="geometricPrecision"/>
<rect x="284.5" y="268.75" width="3.12" height="2.5" fill="#000000"/>
<rect x="320.5" y="271.88" width="2.75" height="2.5" fill="#000000"/>
<polyline points="284.5,276.88 296.38,276.88" fill="none" stroke="#000000" stroke-width="1" shape-rendering="geometricPrecision"/>
<polyline points="298.5,278.12 309.5,278.12 322,288.12" fill="none" stroke="#000000" stroke-width="1.2" shape-rendering="geometricPrecision"/>
<polyline points="327,271.88 322,288.12" fill="none" stroke="#000000" stroke-width="1" shape-rendering="geometricPrecision"/>
<polyline points="330.75,271.88 326,288.12" fill="none" stroke="#000000" stroke-width="1" shape-rendering="geometricPrecision"/>
<polyline points="333.88,272.5 329.75,288.12" fill="none" stroke="#000000" stroke-width="1" shape-rendering="geometricPrecision"/>
<rect x="319.5" y="279.75" width="5.62" height="1.5" fill="#00ffff" stroke="#000000" stroke-width="1"/>
<rect x="325.75" y="280.38" width="5.62" height="1.5" fill="#00ffff" stroke="#000000" stroke-width="1"/>
<polyline points="284.5,276.88 284.5,295.62 322,295.62" fill="none" stroke="#000000" stroke-width="1" shape-rendering="geometricPrecision"/>
<rect x="281.75" y="278.12" width="1.75" height="18.75" fill="#00ffff" stroke="#000000" stroke-width="1"/>
<polyline points="322.62,288.12 322.62,297.5" fill="none" stroke="#000000" stroke-width="1" shape-rendering="geometricPrecision"/>
<polyline points="327.62,288.12 327.62,292.5 330.75,296.88" fill="none" stroke="#000000" stroke-width="1" shape-rendering="geometricPrecision"/>
<rect x="787.7" y="240.62" width="5" height="8.12" fill="#00ffff" stroke="#000000" stroke-width="1"/>
<polyline points="787.7,243.12 792.7,243.12" fill="none" stroke="#000000" stroke-width="1" shape-rendering="geometricPrecision"/>
<polyline points="787.7,245.25 792.7,245.25" fill="none" stroke="#000000" stroke-width="1" shape-rendering="geometricPrecision"/>
<polyline points="787.7,247.25 792.7,247.25" fill="none" stroke="#000000" stroke-width="1" shape-rendering="geometricPrecision"/>
<rect x="786.2" y="248.75" width="7.75" height="6.88" fill="#00ffff" stroke="#000000" stroke-width="1"/>
<polygon points="783.7,256.25 818.08,256.25 838.08,271.25 833.7,288.12 841.83,288.12 841.83,297.5 783.08,297.5 783.08,266.25 783.7,265" fill="#00ffff" stroke="#000000" stroke-width="1" shape-rendering="geometricPrecision"/>
<rect x="800.58" y="238.12" width="17.5" height="18.12" fill="#00ffff" stroke="#000000" stroke-width="1"/>
<polyline points="802.2,242 807.7,242" fill="none" stroke="#000000" stroke-width="0.75" shape-rendering="geometricPrecision"/>
<polyline points="810.95,242 816.83,242" fill="none" stroke="#000000" stroke-width="0.75" shape-rendering="geometricPrecision"/>
<polyline points="802.2,243.45 807.7,243.45" fill="none" stroke="#000000" stroke-width="0.75" shape-rendering="geometricPrecision"/>
<polyline points="810.95,243.45 816.83,243.45" fill="none" stroke="#000000" stroke-width="0.75" shape-rendering="geometricPrecision"/>
<polyline points="802.2,244.9 807.7,244.9" fill="none" stroke="#000000" stroke-width="0.75" shape-rendering="geometricPrecision"/>
<polyline points="810.95,244.9 816.83,244.9" fill="none" stroke="#000000" stroke-width="0.75" shape-rendering="geometricPrecision"/>
<polyline points="802.2,246.35 807.7,246.35" fill="none" stroke="#000000" stroke-width="0.75" shape-rendering="geometricPrecision"/>
<polyline points="810.95,246.35 816.83,246.35" fill="none" stroke="#000000" stroke-width="0.75" shape-rendering="geometricPrecision"/>
<polyline points="802.2,247.8 807.7,247.8" fill="none" stroke="#000000" stroke-width="0.75" shape-rendering="geometricPrecision"/>
<polyline points="810.95,247.8 816.83,247.8" fill="none" stroke="#000000" stroke-width="0.75" shape-rendering="geometricPrecision"/>
<polyline points="802.2,249.25 807.7,249.25" fill="none" stroke="#000000" stroke-width="0.75" shape-rendering="geometricPrecision"/>
<polyline points="810.95,249.25 816.83,249.25" fill="none" stroke="#000000" stroke-width="0.75" shape-rendering="geometricPrecision"/>
<polyline points="802.2,250.7 807.7,250.7" fill="none" stroke="#000000" stroke-width="0.75" shape-rendering="geometricPrecision"/>
<polyline points="810.95,250.7 816.83,250.7" fill="none" stroke="#000000" stroke-width="0.75" shape-rendering="geometricPrecision"/>
<polyline points="802.2,252.15 807.7,252.15" fill="none" stroke="#000000" stroke-width="0.75" shape-rendering="geometricPrecision"/>
<polyline points="810.95,252.15 816.83,252.15" fill="none" stroke="#000000" stroke-width="0.75" shape-rendering="geometricPrecision"/>
<polyline points="802.2,253.6 807.7,253.6" fill="none" stroke="#000000" stroke-width="0.75" shape-rendering="geometricPrecision"/>
<polyline points="810.95,253.6 816.83,253.6" fill="none" stroke="#000000" stroke-width="0.75" shape-rendering="geometricPrecision"/>
<rect x="808.08" y="238.5" width="2.5" height="2.5" fill="#000000"/>
<rect x="808.08" y="241" width="2.5" height="14.62" fill="#00ffff"/>
<polyline points="800.58,241 818.08,241" fill="none" stroke="#000000" stroke-width="1" shape-rendering="geometricPrecision"/>
<rect x="798.08" y="238.12" width="2.12" height="59.38" fill="#00ffff" stroke="#000000" stroke-width="1"/>
<polyline points="783.7,266.25 798.08,267.5" fill="none" stroke="#000000" stroke-width="1" shape-rendering="geometricPrecision"/>
<polyline points="800.2,259.38 818.08,259.38 792.45,259.38" fill="none" stroke="#000000" stroke-width="1" shape-rendering="geometricPrecision"/>
<polyline points="794.33,259.38 791.83,263.75 798.08,264.75" fill="none" stroke="#000000" stroke-width="1" shape-rendering="geometricPrecision"/>
<polyline points="800.2,264.75 826.2,267.5 818.08,259.38" fill="none" stroke="#000000" stroke-width="1" shape-rendering="geometricPrecision"/>
<polyline points="800.2,270 818.7,273.12 818.7,276.88 811.2,276.88 800.2,273.12" fill="none" stroke="#000000" stroke-width="1" shape-rendering="geometricPrecision"/>
<polyline points="791.2,269.38 796.83,269.38 796.83,273.75 793.7,273.75" fill="none" stroke="#000000" stroke-width="1" shape-rendering="geometricPrecision"/>
<rect x="786.2" y="268.75" width="3.12" height="2.5" fill="#000000"/>
<rect x="822.2" y="271.88" width="2.75" height="2.5" fill="#000000"/>
<polyline points="786.2,276.88 798.08,276.88" fill="none" stroke="#000000" stroke-width="1" shape-rendering="geometricPrecision"/>
<polyline points="800.2,278.12 811.2,278.12 823.7,288.12" fill="none" stroke="#000000" stroke-width="1.2" shape-rendering="geometricPrecision"/>
<polyline points="828.7,271.88 823.7,288.12" fill="none" stroke="#000000" stroke-width="1" shape-rendering="geometricPrecision"/>
<polyline points="832.45,271.88 827.7,288.12" fill="none" stroke="#000000" stroke-width="1" shape-rendering="geometricPrecision"/>
<polyline points="835.58,272.5 831.45,288.12" fill="none" stroke="#000000" stroke-width="1" shape-rendering="geometricPrecision"/>
<rect x="821.2" y="279.75" width="5.62" height="1.5" fill="#00ffff" stroke="#000000" stroke-width="1"/>
<rect x="827.45" y="280.38" width="5.62" height="1.5" fill="#00ffff" stroke="#000000" stroke-width="1"/>
<polyline points="786.2,276.88 786.2,295.62 823.7,295.62" fill="none" stroke="#000000" stroke-width="1" shape-rendering="geometricPrecision"/>
<rect x="783.45" y="278.12" width="1.75" height="18.75" fill="#00ffff" stroke="#000000" stroke-width="1"/>
<polyline points="824.33,288.12 824.33,297.5" fill="none" stroke="#000000" stroke-width="1" shape-rendering="geometricPrecision"/>
<polyline points="829.33,288.12 829.33,292.5 832.45,296.88" fill="none" stroke="#000000" stroke-width="1" shape-rendering="geometricPrecision"/>
<polygon points="378.5,147.25 385.6,147.25 385.6,151.85 392.5,154.45 392.5,157.5 443.5,157.5 443.5,178.15 440,178.15 432.5,171.25 378.5,171.25" fill="#00ffff" stroke="#000000" stroke-width="1" shape-rendering="geometricPrecision"/>
<rect x="399.5" y="159.45" width="29.3" height="10" fill="#404848" stroke="#000000" stroke-width="1"/>
<polyline points="401.5,166.25 405.5,166.25 407.5,162.75 412.5,162.75" fill="none" stroke="#00ffff" stroke-width="1.3" shape-rendering="geometricPrecision"/>
<polyline points="404.5,168.75 411.5,168.75 413.5,165.75 420.5,165.75 422.5,162.75 427,162.75" fill="none" stroke="#00ffff" stroke-width="1.3" shape-rendering="geometricPrecision"/>
<polyline points="416.5,168.75 423.5,168.75 425,166.25 428,166.25" fill="none" stroke="#00ffff" stroke-width="1.3" shape-rendering="geometricPrecision"/>
<polyline points="415.4,155.25 415.4,149.75 428,149.75 428,147.55" fill="none" stroke="#000000" stroke-width="3"/>
<polyline points="415.4,155.25 415.4,149.75 428,149.75 428,148.05" fill="none" stroke="#e8e8e8" stroke-width="1.2"/>
<circle cx="415.4" cy="158.65" r="4" fill="#b4b4b4" stroke="#5a5a5a" stroke-width="0.8" shape-rendering="geometricPrecision"/>
<rect x="413.6" y="156.35" width="0.9" height="0.9" fill="#ffffff"/>
<rect x="415.6" y="156.35" width="0.9" height="0.9" fill="#ffffff"/>
<rect x="412.6" y="158.15" width="0.9" height="0.9" fill="#ffffff"/>
<rect x="414.6" y="158.15" width="0.9" height="0.9" fill="#ffffff"/>
<rect x="416.6" y="158.15" width="0.9" height="0.9" fill="#ffffff"/>
<rect x="413.6" y="159.85" width="0.9" height="0.9" fill="#ffffff"/>
<rect x="415.6" y="159.85" width="0.9" height="0.9" fill="#ffffff"/>
<rect x="417.4" y="159.85" width="0.9" height="0.9" fill="#ffffff"/>
<rect x="414.6" y="154.85" width="0.9" height="0.9" fill="#ffffff"/>
<polygon points="614,143 621.1,143 621.1,147.6 628,150.2 628,153.25 679,153.25 679,173.9 675.5,173.9 668,167 614,167" fill="#00ffff" stroke="#000000" stroke-width="1" shape-rendering="geometricPrecision"/>
<rect x="635" y="155.2" width="29.3" height="10" fill="#404848" stroke="#000000" stroke-width="1"/>
<polyline points="637,162 641,162 643,158.5 648,158.5" fill="none" stroke="#00ffff" stroke-width="1.3" shape-rendering="geometricPrecision"/>
<polyline points="640,164.5 647,164.5 649,161.5 656,161.5 658,158.5 662.5,158.5" fill="none" stroke="#00ffff" stroke-width="1.3" shape-rendering="geometricPrecision"/>
<polyline points="652,164.5 659,164.5 660.5,162 663.5,162" fill="none" stroke="#00ffff" stroke-width="1.3" shape-rendering="geometricPrecision"/>
<polyline points="650.9,151 650.9,145.5 663.5,145.5 663.5,143.3" fill="none" stroke="#000000" stroke-width="3"/>
<polyline points="650.9,151 650.9,145.5 663.5,145.5 663.5,143.8" fill="none" stroke="#e8e8e8" stroke-width="1.2"/>
<circle cx="650.9" cy="154.4" r="4" fill="#b4b4b4" stroke="#5a5a5a" stroke-width="0.8" shape-rendering="geometricPrecision"/>
<rect x="649.1" y="152.1" width="0.9" height="0.9" fill="#ffffff"/>
<rect x="651.1" y="152.1" width="0.9" height="0.9" fill="#ffffff"/>
<rect x="648.1" y="153.9" width="0.9" height="0.9" fill="#ffffff"/>
<rect x="650.1" y="153.9" width="0.9" height="0.9" fill="#ffffff"/>
<rect x="652.1" y="153.9" width="0.9" height="0.9" fill="#ffffff"/>
<rect x="649.1" y="155.6" width="0.9" height="0.9" fill="#ffffff"/>
<rect x="651.1" y="155.6" width="0.9" height="0.9" fill="#ffffff"/>
<rect x="652.9" y="155.6" width="0.9" height="0.9" fill="#ffffff"/>
<rect x="650.1" y="150.6" width="0.9" height="0.9" fill="#ffffff"/>
<rect x="338.4" y="198.5" width="10.3" height="10" fill="#00ffff" stroke="#000000" stroke-width="1"/>
<rect x="336.2" y="185.4" width="13.1" height="10.9" fill="#00ffff" stroke="#000000" stroke-width="1"/>
<rect x="338.8" y="186" width="10" height="9.8" fill="#00ffff" stroke="#000000" stroke-width="1"/>
<rect x="355.8" y="185.4" width="1.7" height="9.7" fill="#00ffff" stroke="#000000" stroke-width="1"/>
<rect x="349.3" y="177.3" width="6.5" height="25.9" fill="#00ffff" stroke="#000000" stroke-width="1"/>
<polyline points="338.8,186 348.8,195.8" fill="none" stroke="#000000" stroke-width="1" shape-rendering="geometricPrecision"/>
<polyline points="338.8,195.8 348.8,186" fill="none" stroke="#000000" stroke-width="1" shape-rendering="geometricPrecision"/>
<rect x="896" y="198.6" width="10.3" height="10" fill="#00ffff" stroke="#000000" stroke-width="1"/>
<rect x="895.4" y="185.5" width="13.1" height="10.9" fill="#00ffff" stroke="#000000" stroke-width="1"/>
<rect x="895.9" y="186.1" width="10" height="9.8" fill="#00ffff" stroke="#000000" stroke-width="1"/>
<rect x="887.2" y="185.5" width="1.7" height="9.7" fill="#00ffff" stroke="#000000" stroke-width="1"/>
<rect x="888.9" y="177.4" width="6.5" height="25.9" fill="#00ffff" stroke="#000000" stroke-width="1"/>
<polyline points="895.9,186.1 905.9,195.9" fill="none" stroke="#000000" stroke-width="1" shape-rendering="geometricPrecision"/>
<polyline points="895.9,195.9 905.9,186.1" fill="none" stroke="#000000" stroke-width="1" shape-rendering="geometricPrecision"/>
<rect x="582" y="374.4" width="10.3" height="10" fill="#00ffff" stroke="#000000" stroke-width="1"/>
<rect x="581.4" y="361.3" width="13.1" height="10.9" fill="#00ffff" stroke="#000000" stroke-width="1"/>
<rect x="581.9" y="361.9" width="10" height="9.8" fill="#00ffff" stroke="#000000" stroke-width="1"/>
<rect x="573.2" y="361.3" width="1.7" height="9.7" fill="#00ffff" stroke="#000000" stroke-width="1"/>
<rect x="574.9" y="353.2" width="6.5" height="25.9" fill="#00ffff" stroke="#000000" stroke-width="1"/>
<polyline points="581.9,361.9 591.9,371.7" fill="none" stroke="#000000" stroke-width="1" shape-rendering="geometricPrecision"/>
<polyline points="581.9,371.7 591.9,361.9" fill="none" stroke="#000000" stroke-width="1" shape-rendering="geometricPrecision"/>
<polygon points="392.4,314.1 424.7,314.1 410.7,350.7 407,350.7" fill="#00ffff" stroke="#000000" stroke-width="1" shape-rendering="geometricPrecision"/>
<rect x="393.8" y="311.3" width="4.3" height="3.7" fill="#00ffff" stroke="#000000" stroke-width="1"/>
<rect x="419" y="311.3" width="4.4" height="3.7" fill="#00ffff" stroke="#000000" stroke-width="1"/>
<rect x="391.4" y="238.2" width="34.3" height="73.1" fill="#00ffff" stroke="#000000" stroke-width="1"/>
<polyline points="391.4,251.3 425.7,251.3" fill="none" stroke="#000000" stroke-width="1"/>
<rect x="390" y="240" width="4.2" height="10.4" fill="#00ffff" stroke="#000000" stroke-width="1"/>
<polyline points="392,254.1 416.7,254.1 416.7,271 392,282.2" fill="none" stroke="#000000" stroke-width="1" shape-rendering="geometricPrecision"/>
<rect x="405.4" y="303.2" width="6.2" height="4.4" fill="#00ffff" stroke="#000000" stroke-width="1"/>
<rect x="404.2" y="356.8" width="9.2" height="3" fill="#00ffff" stroke="#000000" stroke-width="1"/>
<circle cx="408.8" cy="354.6" r="4.2" fill="#00ffff" stroke="#000000" stroke-width="1" shape-rendering="geometricPrecision"/>
<circle cx="408.8" cy="354.6" r="2.1" fill="#00ffff" stroke="#000000" stroke-width="1" shape-rendering="geometricPrecision"/>
<polygon points="844.4,225.4 876.7,225.4 862.7,262 859,262" fill="#00ffff" stroke="#000000" stroke-width="1" shape-rendering="geometricPrecision"/>
<rect x="845.8" y="222.6" width="4.3" height="3.7" fill="#00ffff" stroke="#000000" stroke-width="1"/>
<rect x="871" y="222.6" width="4.4" height="3.7" fill="#00ffff" stroke="#000000" stroke-width="1"/>
<rect x="843.4" y="149.5" width="34.3" height="73.1" fill="#00ffff" stroke="#000000" stroke-width="1"/>
<polyline points="843.4,162.6 877.7,162.6" fill="none" stroke="#000000" stroke-width="1"/>
<rect x="842" y="151.3" width="4.2" height="10.4" fill="#00ffff" stroke="#000000" stroke-width="1"/>
<polyline points="844,165.4 868.7,165.4 868.7,182.3 844,193.5" fill="none" stroke="#000000" stroke-width="1" shape-rendering="geometricPrecision"/>
<rect x="856.2" y="268.1" width="9.2" height="3" fill="#00ffff" stroke="#000000" stroke-width="1"/>
<circle cx="860.8" cy="265.9" r="4.2" fill="#00ffff" stroke="#000000" stroke-width="1" shape-rendering="geometricPrecision"/>
<circle cx="860.8" cy="265.9" r="2.1" fill="#00ffff" stroke="#000000" stroke-width="1" shape-rendering="geometricPrecision"/>
<rect x="563.4" y="238.25" width="33.1" height="65.3" fill="#00ffff" stroke="#000000" stroke-width="1"/>
<polyline points="563.4,255.45 596.5,255.45" fill="none" stroke="#000000" stroke-width="1"/>
<polyline points="563.4,295.15 596.5,295.15" fill="none" stroke="#000000" stroke-width="1"/>
<polyline points="596.5,260.35 572.5,260.35 572.5,269.75 587.1,277.25 596.5,277.25" fill="none" stroke="#000000" stroke-width="1" shape-rendering="geometricPrecision"/>
<polyline points="577.1,260.35 577.1,271.75" fill="none" stroke="#000000" stroke-width="1"/>
<path d="M636.5,284 c0.4,-4 2.9,-6 5.9,-6 c3.5,0 5.3,2.5 5.3,5.5 v6 c0,2.5 -1.8,4.5 -3.8,4.7" fill="none" stroke="#000" stroke-width="3.2" shape-rendering="geometricPrecision"/>
<path d="M636.5,284 c0.4,-4 2.9,-6 5.9,-6 c3.5,0 5.3,2.5 5.3,5.5 v6 c0,2.5 -1.8,4.5 -3.8,4.7" fill="none" stroke="#00ffff" stroke-width="1.5" shape-rendering="geometricPrecision"/>
<circle cx="623.4" cy="287.3" r="3.2" fill="#00ffff" stroke="#000000" stroke-width="1" shape-rendering="geometricPrecision"/>
<circle cx="637.1" cy="286.9" r="3.7" fill="#00ffff" stroke="#000000" stroke-width="1" shape-rendering="geometricPrecision"/>
<rect x="615.4" y="292.2" width="3.2" height="2.6" fill="#00ffff" stroke="#000000" stroke-width="1"/>
<rect x="618.4" y="291" width="25" height="4.2" fill="#00ffff" stroke="#000000" stroke-width="1"/>
<polygon points="585.22,313.81 581.81,317.22 576.99,317.22 573.58,313.81 573.58,308.99 576.99,305.58 581.81,305.58 585.22,308.99" fill="#00ffff" stroke="#000000" stroke-width="1" shape-rendering="geometricPrecision"/>
<circle cx="579.4" cy="311.4" r="4.6" fill="#00ffff" stroke="#000000" stroke-width="1" shape-rendering="geometricPrecision"/>
<circle cx="579.4" cy="311.4" r="2.4" fill="#00ffff" stroke="#000000" stroke-width="1" shape-rendering="geometricPrecision"/>
<rect x="11.35" y="347.25" width="4.35" height="3.4" fill="#00ffff" stroke="#000000" stroke-width="1"/>
<rect x="4.5" y="353.75" width="6.2" height="27.5" fill="#00ffff" stroke="#000000" stroke-width="1"/>
<path d="M7.6,385 v-12.5 q0,-5 5.6,-5.5 v18 z" fill="#00ffff" stroke="#000000" stroke-width="1" shape-rendering="geometricPrecision"/>
<rect x="44.5" y="367.5" width="3.1" height="17.5" fill="#00ffff" stroke="#000000" stroke-width="1"/>
<rect x="47.6" y="356.25" width="2.3" height="5" fill="#00ffff" stroke="#000000" stroke-width="1"/>
<rect x="10.7" y="350.4" width="36.9" height="17.1" fill="#00ffff" stroke="#000000" stroke-width="1"/>
<rect x="16.35" y="353.5" width="24.35" height="10.9" fill="#00ffff" stroke="#000000" stroke-width="1"/>
<polygon points="18.85,368 37.6,368 30.7,378 26.35,378" fill="#00ffff" stroke="#000000" stroke-width="1" shape-rendering="geometricPrecision"/>
<rect x="26.35" y="378.65" width="4.35" height="2.8" fill="#00ffff" stroke="#000000" stroke-width="1"/>
<polygon points="14.1,375.75 15.7,374.4 21.3,374.4 22.9,376.25 22.9,383.45 14.1,383.45" fill="#00ffff" stroke="#000000" stroke-width="1" shape-rendering="geometricPrecision"/>
<circle cx="15.3" cy="373.25" r="1.4" fill="#00ffff" stroke="#000000" stroke-width="1" shape-rendering="geometricPrecision"/>
<rect x="74.35" y="347.25" width="4.35" height="3.4" fill="#00ffff" stroke="#000000" stroke-width="1"/>
<rect x="67.5" y="353.75" width="6.2" height="27.5" fill="#00ffff" stroke="#000000" stroke-width="1"/>
<path d="M70.6,385 v-12.5 q0,-5 5.6,-5.5 v18 z" fill="#00ffff" stroke="#000000" stroke-width="1" shape-rendering="geometricPrecision"/>
<rect x="107.5" y="367.5" width="3.1" height="17.5" fill="#00ffff" stroke="#000000" stroke-width="1"/>
<rect x="110.6" y="356.25" width="2.3" height="5" fill="#00ffff" stroke="#000000" stroke-width="1"/>
<rect x="73.7" y="350.4" width="36.9" height="17.1" fill="#00ffff" stroke="#000000" stroke-width="1"/>
<rect x="79.35" y="353.5" width="24.35" height="10.9" fill="#00ffff" stroke="#000000" stroke-width="1"/>
<polygon points="81.85,368 100.6,368 93.7,378 89.35,378" fill="#00ffff" stroke="#000000" stroke-width="1" shape-rendering="geometricPrecision"/>
<rect x="89.35" y="378.65" width="4.35" height="2.8" fill="#00ffff" stroke="#000000" stroke-width="1"/>
<polygon points="77.1,375.75 78.7,374.4 84.3,374.4 85.9,376.25 85.9,383.45 77.1,383.45" fill="#00ffff" stroke="#000000" stroke-width="1" shape-rendering="geometricPrecision"/>
<circle cx="78.3" cy="373.25" r="1.4" fill="#00ffff" stroke="#000000" stroke-width="1" shape-rendering="geometricPrecision"/>
<rect x="139.15" y="347.25" width="4.35" height="3.4" fill="#00ffff" stroke="#000000" stroke-width="1"/>
<rect x="132.3" y="353.75" width="6.2" height="27.5" fill="#00ffff" stroke="#000000" stroke-width="1"/>
<path d="M135.4,385 v-12.5 q0,-5 5.6,-5.5 v18 z" fill="#00ffff" stroke="#000000" stroke-width="1" shape-rendering="geometricPrecision"/>
<rect x="172.3" y="367.5" width="3.1" height="17.5" fill="#00ffff" stroke="#000000" stroke-width="1"/>
<rect x="175.4" y="356.25" width="2.3" height="5" fill="#00ffff" stroke="#000000" stroke-width="1"/>
<rect x="138.5" y="350.4" width="36.9" height="17.1" fill="#00ffff" stroke="#000000" stroke-width="1"/>
<rect x="144.15" y="353.5" width="24.35" height="10.9" fill="#00ffff" stroke="#000000" stroke-width="1"/>
<polygon points="146.65,368 165.4,368 158.5,378 154.15,378" fill="#00ffff" stroke="#000000" stroke-width="1" shape-rendering="geometricPrecision"/>
<rect x="154.15" y="378.65" width="4.35" height="2.8" fill="#00ffff" stroke="#000000" stroke-width="1"/>
<polygon points="141.9,375.75 143.5,374.4 149.1,374.4 150.7,376.25 150.7,383.45 141.9,383.45" fill="#00ffff" stroke="#000000" stroke-width="1" shape-rendering="geometricPrecision"/>
<circle cx="143.1" cy="373.25" r="1.4" fill="#00ffff" stroke="#000000" stroke-width="1" shape-rendering="geometricPrecision"/>
<rect x="201.85" y="347.25" width="4.35" height="3.4" fill="#00ffff" stroke="#000000" stroke-width="1"/>
<rect x="195" y="353.75" width="6.2" height="27.5" fill="#00ffff" stroke="#000000" stroke-width="1"/>
<path d="M198.1,385 v-12.5 q0,-5 5.6,-5.5 v18 z" fill="#00ffff" stroke="#000000" stroke-width="1" shape-rendering="geometricPrecision"/>
<rect x="235" y="367.5" width="3.1" height="17.5" fill="#00ffff" stroke="#000000" stroke-width="1"/>
<rect x="238.1" y="356.25" width="2.3" height="5" fill="#00ffff" stroke="#000000" stroke-width="1"/>
<rect x="201.2" y="350.4" width="36.9" height="17.1" fill="#00ffff" stroke="#000000" stroke-width="1"/>
<rect x="206.85" y="353.5" width="24.35" height="10.9" fill="#00ffff" stroke="#000000" stroke-width="1"/>
<polygon points="209.35,368 228.1,368 221.2,378 216.85,378" fill="#00ffff" stroke="#000000" stroke-width="1" shape-rendering="geometricPrecision"/>
<rect x="216.85" y="378.65" width="4.35" height="2.8" fill="#00ffff" stroke="#000000" stroke-width="1"/>
<polygon points="204.6,375.75 206.2,374.4 211.8,374.4 213.4,376.25 213.4,383.45 204.6,383.45" fill="#00ffff" stroke="#000000" stroke-width="1" shape-rendering="geometricPrecision"/>
<circle cx="205.8" cy="373.25" r="1.4" fill="#00ffff" stroke="#000000" stroke-width="1" shape-rendering="geometricPrecision"/>
<rect x="26.35" y="411.25" width="4.35" height="3.4" fill="#00ffff" stroke="#000000" stroke-width="1"/>
<rect x="19.5" y="417.75" width="6.2" height="27.5" fill="#00ffff" stroke="#000000" stroke-width="1"/>
<path d="M22.6,449 v-12.5 q0,-5 5.6,-5.5 v18 z" fill="#00ffff" stroke="#000000" stroke-width="1" shape-rendering="geometricPrecision"/>
<rect x="59.5" y="431.5" width="3.1" height="17.5" fill="#00ffff" stroke="#000000" stroke-width="1"/>
<rect x="62.6" y="420.25" width="2.3" height="5" fill="#00ffff" stroke="#000000" stroke-width="1"/>
<rect x="25.7" y="414.4" width="36.9" height="17.1" fill="#00ffff" stroke="#000000" stroke-width="1"/>
<rect x="31.35" y="417.5" width="24.35" height="10.9" fill="#00ffff" stroke="#000000" stroke-width="1"/>
<polygon points="33.85,432 52.6,432 45.7,442 41.35,442" fill="#00ffff" stroke="#000000" stroke-width="1" shape-rendering="geometricPrecision"/>
<rect x="41.35" y="442.65" width="4.35" height="2.8" fill="#00ffff" stroke="#000000" stroke-width="1"/>
<polygon points="29.1,439.75 30.7,438.4 36.3,438.4 37.9,440.25 37.9,447.45 29.1,447.45" fill="#00ffff" stroke="#000000" stroke-width="1" shape-rendering="geometricPrecision"/>
<circle cx="30.3" cy="437.25" r="1.4" fill="#00ffff" stroke="#000000" stroke-width="1" shape-rendering="geometricPrecision"/>
<rect x="90.45" y="411.25" width="4.35" height="3.4" fill="#00ffff" stroke="#000000" stroke-width="1"/>
<rect x="83.6" y="417.75" width="6.2" height="27.5" fill="#00ffff" stroke="#000000" stroke-width="1"/>
<path d="M86.7,449 v-12.5 q0,-5 5.6,-5.5 v18 z" fill="#00ffff" stroke="#000000" stroke-width="1" shape-rendering="geometricPrecision"/>
<rect x="123.6" y="431.5" width="3.1" height="17.5" fill="#00ffff" stroke="#000000" stroke-width="1"/>
<rect x="126.7" y="420.25" width="2.3" height="5" fill="#00ffff" stroke="#000000" stroke-width="1"/>
<rect x="89.8" y="414.4" width="36.9" height="17.1" fill="#00ffff" stroke="#000000" stroke-width="1"/>
<rect x="95.45" y="417.5" width="24.35" height="10.9" fill="#00ffff" stroke="#000000" stroke-width="1"/>
<polygon points="97.95,432 116.7,432 109.8,442 105.45,442" fill="#00ffff" stroke="#000000" stroke-width="1" shape-rendering="geometricPrecision"/>
<rect x="105.45" y="442.65" width="4.35" height="2.8" fill="#00ffff" stroke="#000000" stroke-width="1"/>
<polygon points="93.2,439.75 94.8,438.4 100.4,438.4 102,440.25 102,447.45 93.2,447.45" fill="#00ffff" stroke="#000000" stroke-width="1" shape-rendering="geometricPrecision"/>
<circle cx="94.4" cy="437.25" r="1.4" fill="#00ffff" stroke="#000000" stroke-width="1" shape-rendering="geometricPrecision"/>
<rect x="154.25" y="411.25" width="4.35" height="3.4" fill="#00ffff" stroke="#000000" stroke-width="1"/>
<rect x="147.4" y="417.75" width="6.2" height="27.5" fill="#00ffff" stroke="#000000" stroke-width="1"/>
<path d="M150.5,449 v-12.5 q0,-5 5.6,-5.5 v18 z" fill="#00ffff" stroke="#000000" stroke-width="1" shape-rendering="geometricPrecision"/>
<rect x="187.4" y="431.5" width="3.1" height="17.5" fill="#00ffff" stroke="#000000" stroke-width="1"/>
<rect x="190.5" y="420.25" width="2.3" height="5" fill="#00ffff" stroke="#000000" stroke-width="1"/>
<rect x="153.6" y="414.4" width="36.9" height="17.1" fill="#00ffff" stroke="#000000" stroke-width="1"/>
<rect x="159.25" y="417.5" width="24.35" height="10.9" fill="#00ffff" stroke="#000000" stroke-width="1"/>
<polygon points="161.75,432 180.5,432 173.6,442 169.25,442" fill="#00ffff" stroke="#000000" stroke-width="1" shape-rendering="geometricPrecision"/>
<rect x="169.25" y="442.65" width="4.35" height="2.8" fill="#00ffff" stroke="#000000" stroke-width="1"/>
<polygon points="157,439.75 158.6,438.4 164.2,438.4 165.8,440.25 165.8,447.45 157,447.45" fill="#00ffff" stroke="#000000" stroke-width="1" shape-rendering="geometricPrecision"/>
<circle cx="158.2" cy="437.25" r="1.4" fill="#00ffff" stroke="#000000" stroke-width="1" shape-rendering="geometricPrecision"/>
<rect x="217.25" y="411.25" width="4.35" height="3.4" fill="#00ffff" stroke="#000000" stroke-width="1"/>
<rect x="210.4" y="417.75" width="6.2" height="27.5" fill="#00ffff" stroke="#000000" stroke-width="1"/>
<path d="M213.5,449 v-12.5 q0,-5 5.6,-5.5 v18 z" fill="#00ffff" stroke="#000000" stroke-width="1" shape-rendering="geometricPrecision"/>
<rect x="250.4" y="431.5" width="3.1" height="17.5" fill="#00ffff" stroke="#000000" stroke-width="1"/>
<rect x="253.5" y="420.25" width="2.3" height="5" fill="#00ffff" stroke="#000000" stroke-width="1"/>
<rect x="216.6" y="414.4" width="36.9" height="17.1" fill="#00ffff" stroke="#000000" stroke-width="1"/>
<rect x="222.25" y="417.5" width="24.35" height="10.9" fill="#00ffff" stroke="#000000" stroke-width="1"/>
<polygon points="224.75,432 243.5,432 236.6,442 232.25,442" fill="#00ffff" stroke="#000000" stroke-width="1" shape-rendering="geometricPrecision"/>
<rect x="232.25" y="442.65" width="4.35" height="2.8" fill="#00ffff" stroke="#000000" stroke-width="1"/>
<polygon points="220,439.75 221.6,438.4 227.2,438.4 228.8,440.25 228.8,447.45 220,447.45" fill="#00ffff" stroke="#000000" stroke-width="1" shape-rendering="geometricPrecision"/>
<circle cx="221.2" cy="437.25" r="1.4" fill="#00ffff" stroke="#000000" stroke-width="1" shape-rendering="geometricPrecision"/>
<rect x="304.25" y="347.5" width="4.35" height="3.4" fill="#00ffff" stroke="#000000" stroke-width="1"/>
<rect x="297.4" y="354" width="6.2" height="27.5" fill="#00ffff" stroke="#000000" stroke-width="1"/>
<path d="M300.5,385.25 v-12.5 q0,-5 5.6,-5.5 v18 z" fill="#00ffff" stroke="#000000" stroke-width="1" shape-rendering="geometricPrecision"/>
<rect x="337.4" y="367.75" width="3.1" height="17.5" fill="#00ffff" stroke="#000000" stroke-width="1"/>
<rect x="340.5" y="356.5" width="2.3" height="5" fill="#00ffff" stroke="#000000" stroke-width="1"/>
<rect x="303.6" y="350.65" width="36.9" height="17.1" fill="#00ffff" stroke="#000000" stroke-width="1"/>
<rect x="309.25" y="353.75" width="24.35" height="10.9" fill="#00ffff" stroke="#000000" stroke-width="1"/>
<polygon points="311.75,368.25 330.5,368.25 323.6,378.25 319.25,378.25" fill="#00ffff" stroke="#000000" stroke-width="1" shape-rendering="geometricPrecision"/>
<rect x="319.25" y="378.9" width="4.35" height="2.8" fill="#00ffff" stroke="#000000" stroke-width="1"/>
<polygon points="307,376 308.6,374.65 314.2,374.65 315.8,376.5 315.8,383.7 307,383.7" fill="#00ffff" stroke="#000000" stroke-width="1" shape-rendering="geometricPrecision"/>
<circle cx="308.2" cy="373.5" r="1.4" fill="#00ffff" stroke="#000000" stroke-width="1" shape-rendering="geometricPrecision"/>
<rect x="938.05" y="259.2" width="4.35" height="3.4" fill="#00ffff" stroke="#000000" stroke-width="1"/>
<rect x="931.2" y="265.7" width="6.2" height="27.5" fill="#00ffff" stroke="#000000" stroke-width="1"/>
<path d="M934.3,296.95 v-12.5 q0,-5 5.6,-5.5 v18 z" fill="#00ffff" stroke="#000000" stroke-width="1" shape-rendering="geometricPrecision"/>
<rect x="971.2" y="279.45" width="3.1" height="17.5" fill="#00ffff" stroke="#000000" stroke-width="1"/>
<rect x="974.3" y="268.2" width="2.3" height="5" fill="#00ffff" stroke="#000000" stroke-width="1"/>
<rect x="937.4" y="262.35" width="36.9" height="17.1" fill="#00ffff" stroke="#000000" stroke-width="1"/>
<rect x="943.05" y="265.45" width="24.35" height="10.9" fill="#00ffff" stroke="#000000" stroke-width="1"/>
<polygon points="945.55,279.95 964.3,279.95 957.4,289.95 953.05,289.95" fill="#00ffff" stroke="#000000" stroke-width="1" shape-rendering="geometricPrecision"/>
<rect x="953.05" y="290.6" width="4.35" height="2.8" fill="#00ffff" stroke="#000000" stroke-width="1"/>
<polygon points="940.8,287.7 942.4,286.35 948,286.35 949.6,288.2 949.6,295.4 940.8,295.4" fill="#00ffff" stroke="#000000" stroke-width="1" shape-rendering="geometricPrecision"/>
<circle cx="942" cy="285.2" r="1.4" fill="#00ffff" stroke="#000000" stroke-width="1" shape-rendering="geometricPrecision"/>
<rect x="578.05" y="522.5" width="4.35" height="3.4" fill="#00ffff" stroke="#000000" stroke-width="1"/>
<rect x="571.2" y="529" width="6.2" height="27.5" fill="#00ffff" stroke="#000000" stroke-width="1"/>
<path d="M574.3,560.25 v-12.5 q0,-5 5.6,-5.5 v18 z" fill="#00ffff" stroke="#000000" stroke-width="1" shape-rendering="geometricPrecision"/>
<rect x="611.2" y="542.75" width="3.1" height="17.5" fill="#00ffff" stroke="#000000" stroke-width="1"/>
<rect x="614.3" y="531.5" width="2.3" height="5" fill="#00ffff" stroke="#000000" stroke-width="1"/>
<rect x="577.4" y="525.65" width="36.9" height="17.1" fill="#00ffff" stroke="#000000" stroke-width="1"/>
<rect x="583.05" y="528.75" width="24.35" height="10.9" fill="#00ffff" stroke="#000000" stroke-width="1"/>
<polygon points="585.55,543.25 604.3,543.25 597.4,553.25 593.05,553.25" fill="#00ffff" stroke="#000000" stroke-width="1" shape-rendering="geometricPrecision"/>
<rect x="593.05" y="553.9" width="4.35" height="2.8" fill="#00ffff" stroke="#000000" stroke-width="1"/>
<polygon points="580.8,551 582.4,549.65 588,549.65 589.6,551.5 589.6,558.7 580.8,558.7" fill="#00ffff" stroke="#000000" stroke-width="1" shape-rendering="geometricPrecision"/>
<circle cx="582" cy="548.5" r="1.4" fill="#00ffff" stroke="#000000" stroke-width="1" shape-rendering="geometricPrecision"/>
<path d="M268.3,386.25 v-15 h10 v-8.5 a7.8,7.8 0 0 1 15.6,0 v23.5 z" fill="#00ffff" stroke="#000000" stroke-width="1" shape-rendering="geometricPrecision"/>
<circle cx="285.8" cy="363.5" r="1.3" fill="#00ffff" stroke="#000000" stroke-width="1" shape-rendering="geometricPrecision"/>
<path d="M904.2,297.25 v-15 h10 v-8.5 a7.8,7.8 0 0 1 15.6,0 v23.5 z" fill="#00ffff" stroke="#000000" stroke-width="1" shape-rendering="geometricPrecision"/>
<circle cx="921.7" cy="274.5" r="1.3" fill="#00ffff" stroke="#000000" stroke-width="1" shape-rendering="geometricPrecision"/>
<path d="M620,558.75 v-15 h10 v-8.5 a7.8,7.8 0 0 1 15.6,0 v23.5 z" fill="#00ffff" stroke="#000000" stroke-width="1" shape-rendering="geometricPrecision"/>
<circle cx="637.5" cy="536" r="1.3" fill="#00ffff" stroke="#000000" stroke-width="1" shape-rendering="geometricPrecision"/>
<polygon points="935.4,385.4 955.6,385.4 949.1,398.5 941.6,398.5" fill="#4aa8a8" stroke="None" stroke-width="1" shape-rendering="geometricPrecision"/>
<rect x="935.4" y="360.4" width="20.2" height="25" fill="#55c3c3"/>
<polygon points="935.4,360.4 955.6,360.4 955.6,385.4 949.1,398.5 941.6,398.5 935.4,385.4" fill="none" stroke="#000000" stroke-width="1" shape-rendering="geometricPrecision"/>
<rect x="942.6" y="364.6" width="5.8" height="3.4" fill="#00e0e8" stroke="#000000" stroke-width="1"/>
<rect x="942.6" y="377.6" width="5.8" height="3.4" fill="#00e0e8" stroke="#000000" stroke-width="1"/>
<rect x="942.6" y="354.7" width="5.8" height="3.4" fill="#00e0e8" stroke="#000000" stroke-width="1"/>
<rect x="435" y="180.2" width="1.6" height="9.5" fill="#00ffff"/>
<rect x="539.7" y="180.2" width="1.6" height="9.5" fill="#00ffff"/>
<polyline points="435.5,183.7 540.5,183.7" fill="none" stroke="#00ffff" stroke-width="1" stroke-dasharray="8,4.2" stroke-dashoffset="-11"/>
<polyline points="435.5,185.7 540.5,185.7" fill="none" stroke="#00ffff" stroke-width="1"/>
<path d="M445,183.7 C445.8,179 448,179 448.8,184 L451.1,189.5 L454.1,186.2 M457.2,183.7 C458,179 460.2,179 461,184 L463.3,189.5 L466.3,186.2 M469.4,183.7 C470.2,179 472.4,179 473.2,184 L475.5,189.5 L478.5,186.2 M481.6,183.7 C482.4,179 484.6,179 485.4,184 L487.7,189.5 L490.7,186.2 M493.8,183.7 C494.6,179 496.8,179 497.6,184 L499.9,189.5 L502.9,186.2 M506,183.7 C506.8,179 509,179 509.8,184 L512.1,189.5 L515.1,186.2 M518.2,183.7 C519,179 521.2,179 522,184 L524.3,189.5 L527.3,186.2 M530.4,183.7 C531.2,179 533.4,179 534.2,184 L536.5,189.5 L539.5,186.2" fill="none" stroke="#00ffff" stroke-width="1.15" shape-rendering="geometricPrecision"/>
<circle cx="442.5" cy="185.4" r="3.3" fill="#00ffff" stroke="#000000" stroke-width="1" shape-rendering="geometricPrecision"/>
<rect x="671" y="180.2" width="1.6" height="9.5" fill="#00ffff"/>
<rect x="774.7" y="180.2" width="1.6" height="9.5" fill="#00ffff"/>
<polyline points="671.5,183.7 775.5,183.7" fill="none" stroke="#00ffff" stroke-width="1" stroke-dasharray="8,4.2" stroke-dashoffset="-11"/>
<polyline points="671.5,185.7 775.5,185.7" fill="none" stroke="#00ffff" stroke-width="1"/>
<path d="M681,183.7 C681.8,179 684,179 684.8,184 L687.1,189.5 L690.1,186.2 M693.2,183.7 C694,179 696.2,179 697,184 L699.3,189.5 L702.3,186.2 M705.4,183.7 C706.2,179 708.4,179 709.2,184 L711.5,189.5 L714.5,186.2 M717.6,183.7 C718.4,179 720.6,179 721.4,184 L723.7,189.5 L726.7,186.2 M729.8,183.7 C730.6,179 732.8,179 733.6,184 L735.9,189.5 L738.9,186.2 M742,183.7 C742.8,179 745,179 745.8,184 L748.1,189.5 L751.1,186.2 M754.2,183.7 C755,179 757.2,179 758,184 L760.3,189.5 L763.3,186.2 M766.4,183.7 C767.2,179 769.4,179 770.2,184 L772.5,189.5 L775.5,186.2" fill="none" stroke="#00ffff" stroke-width="1.15" shape-rendering="geometricPrecision"/>
<circle cx="678.5" cy="185.4" r="3.3" fill="#00ffff" stroke="#000000" stroke-width="1" shape-rendering="geometricPrecision"/>
<rect x="938" y="340.4" width="1.6" height="9.5" fill="#00ffff"/>
<rect x="982.7" y="340.4" width="1.6" height="9.5" fill="#00ffff"/>
<polyline points="938.5,343.9 983.5,343.9" fill="none" stroke="#00ffff" stroke-width="1" stroke-dasharray="8,4.2" stroke-dashoffset="-4"/>
<polyline points="938.5,345.9 983.5,345.9" fill="none" stroke="#00ffff" stroke-width="1"/>
<path d="M941,343.9 C941.8,339.2 944,339.2 944.8,344.2 L947.1,349.7 L950.1,346.4 M953.2,343.9 C954,339.2 956.2,339.2 957,344.2 L959.3,349.7 L962.3,346.4 M965.4,343.9 C966.2,339.2 968.4,339.2 969.2,344.2 L971.5,349.7 L974.5,346.4" fill="none" stroke="#00ffff" stroke-width="1.15" shape-rendering="geometricPrecision"/>
<circle cx="979.3" cy="345.6" r="3.3" fill="#00ffff" stroke="#000000" stroke-width="1" shape-rendering="geometricPrecision"/>
<rect x="101" y="674" width="1.6" height="9.5" fill="#00ffff"/>
<rect x="169.7" y="674" width="1.6" height="9.5" fill="#00ffff"/>
<polyline points="101.5,677.5 170.5,677.5" fill="none" stroke="#00ffff" stroke-width="1" stroke-dasharray="8,4.2" stroke-dashoffset="-11"/>
<polyline points="101.5,679.5 170.5,679.5" fill="none" stroke="#00ffff" stroke-width="1"/>
<path d="M111,677.5 C111.8,672.8 114,672.8 114.8,677.8 L117.1,683.3 L120.1,680 M123.2,677.5 C124,672.8 126.2,672.8 127,677.8 L129.3,683.3 L132.3,680 M135.4,677.5 C136.2,672.8 138.4,672.8 139.2,677.8 L141.5,683.3 L144.5,680 M147.6,677.5 C148.4,672.8 150.6,672.8 151.4,677.8 L153.7,683.3 L156.7,680 M159.8,677.5 C160.6,672.8 162.8,672.8 163.6,677.8 L165.9,683.3 L168.9,680" fill="none" stroke="#00ffff" stroke-width="1.15" shape-rendering="geometricPrecision"/>
<circle cx="108.5" cy="679.2" r="3.3" fill="#00ffff" stroke="#000000" stroke-width="1" shape-rendering="geometricPrecision"/>
<rect x="396" y="659" width="1.6" height="9.5" fill="#00ffff"/>
<rect x="513.7" y="659" width="1.6" height="9.5" fill="#00ffff"/>
<polyline points="396.5,662.5 514.5,662.5" fill="none" stroke="#00ffff" stroke-width="1" stroke-dasharray="8,4.2" stroke-dashoffset="-11"/>
<polyline points="396.5,664.5 514.5,664.5" fill="none" stroke="#00ffff" stroke-width="1"/>
<path d="M406,662.5 C406.8,657.8 409,657.8 409.8,662.8 L412.1,668.3 L415.1,665 M418.2,662.5 C419,657.8 421.2,657.8 422,662.8 L424.3,668.3 L427.3,665 M430.4,662.5 C431.2,657.8 433.4,657.8 434.2,662.8 L436.5,668.3 L439.5,665 M442.6,662.5 C443.4,657.8 445.6,657.8 446.4,662.8 L448.7,668.3 L451.7,665 M454.8,662.5 C455.6,657.8 457.8,657.8 458.6,662.8 L460.9,668.3 L463.9,665 M467,662.5 C467.8,657.8 470,657.8 470.8,662.8 L473.1,668.3 L476.1,665 M479.2,662.5 C480,657.8 482.2,657.8 483,662.8 L485.3,668.3 L488.3,665 M491.4,662.5 C492.2,657.8 494.4,657.8 495.2,662.8 L497.5,668.3 L500.5,665 M503.6,662.5 C504.4,657.8 506.6,657.8 507.4,662.8 L509.7,668.3 L512.7,665" fill="none" stroke="#00ffff" stroke-width="1.15" shape-rendering="geometricPrecision"/>
<circle cx="403.5" cy="664.2" r="3.3" fill="#00ffff" stroke="#000000" stroke-width="1" shape-rendering="geometricPrecision"/>
<rect x="505" y="679.2" width="1.6" height="9.5" fill="#00ffff"/>
<rect x="542.7" y="679.2" width="1.6" height="9.5" fill="#00ffff"/>
<polyline points="505.5,682.7 543.5,682.7" fill="none" stroke="#00ffff" stroke-width="1" stroke-dasharray="8,4.2" stroke-dashoffset="-11"/>
<polyline points="505.5,684.7 543.5,684.7" fill="none" stroke="#00ffff" stroke-width="1"/>
<path d="M515,682.7 C515.8,678 518,678 518.8,683 L521.1,688.5 L524.1,685.2 M527.2,682.7 C528,678 530.2,678 531,683 L533.3,688.5 L536.3,685.2" fill="none" stroke="#00ffff" stroke-width="1.15" shape-rendering="geometricPrecision"/>
<circle cx="512.5" cy="684.4" r="3.3" fill="#00ffff" stroke="#000000" stroke-width="1" shape-rendering="geometricPrecision"/>
<rect x="655" y="659" width="1.6" height="9.5" fill="#00ffff"/>
<rect x="772.7" y="659" width="1.6" height="9.5" fill="#00ffff"/>
<polyline points="655.5,662.5 773.5,662.5" fill="none" stroke="#00ffff" stroke-width="1" stroke-dasharray="8,4.2" stroke-dashoffset="-11"/>
<polyline points="655.5,664.5 773.5,664.5" fill="none" stroke="#00ffff" stroke-width="1"/>
<path d="M665,662.5 C665.8,657.8 668,657.8 668.8,662.8 L671.1,668.3 L674.1,665 M677.2,662.5 C678,657.8 680.2,657.8 681,662.8 L683.3,668.3 L686.3,665 M689.4,662.5 C690.2,657.8 692.4,657.8 693.2,662.8 L695.5,668.3 L698.5,665 M701.6,662.5 C702.4,657.8 704.6,657.8 705.4,662.8 L707.7,668.3 L710.7,665 M713.8,662.5 C714.6,657.8 716.8,657.8 717.6,662.8 L719.9,668.3 L722.9,665 M726,662.5 C726.8,657.8 729,657.8 729.8,662.8 L732.1,668.3 L735.1,665 M738.2,662.5 C739,657.8 741.2,657.8 742,662.8 L744.3,668.3 L747.3,665 M750.4,662.5 C751.2,657.8 753.4,657.8 754.2,662.8 L756.5,668.3 L759.5,665 M762.6,662.5 C763.4,657.8 765.6,657.8 766.4,662.8 L768.7,668.3 L771.7,665" fill="none" stroke="#00ffff" stroke-width="1.15" shape-rendering="geometricPrecision"/>
<circle cx="662.5" cy="664.2" r="3.3" fill="#00ffff" stroke="#000000" stroke-width="1" shape-rendering="geometricPrecision"/>
<rect x="765" y="679.2" width="1.6" height="9.5" fill="#00ffff"/>
<rect x="802.7" y="679.2" width="1.6" height="9.5" fill="#00ffff"/>
<polyline points="765.5,682.7 803.5,682.7" fill="none" stroke="#00ffff" stroke-width="1" stroke-dasharray="8,4.2" stroke-dashoffset="-11"/>
<polyline points="765.5,684.7 803.5,684.7" fill="none" stroke="#00ffff" stroke-width="1"/>
<path d="M775,682.7 C775.8,678 778,678 778.8,683 L781.1,688.5 L784.1,685.2 M787.2,682.7 C788,678 790.2,678 791,683 L793.3,688.5 L796.3,685.2" fill="none" stroke="#00ffff" stroke-width="1.15" shape-rendering="geometricPrecision"/>
<circle cx="772.5" cy="684.4" r="3.3" fill="#00ffff" stroke="#000000" stroke-width="1" shape-rendering="geometricPrecision"/>
<rect x="504.75" y="653.5" width="5.5" height="3.5" fill="#00e0e8" stroke="#000000" stroke-width="1"/>
<polygon points="422.32,640.71 418.91,644.12 414.09,644.12 410.68,640.71 410.68,635.89 414.09,632.48 418.91,632.48 422.32,635.89" fill="#00ffff" stroke="#000000" stroke-width="1" shape-rendering="geometricPrecision"/>
<circle cx="416.5" cy="638.3" r="4.6" fill="#00ffff" stroke="#000000" stroke-width="1" shape-rendering="geometricPrecision"/>
<circle cx="416.5" cy="638.3" r="2.4" fill="#00ffff" stroke="#000000" stroke-width="1" shape-rendering="geometricPrecision"/>
<polygon points="456.32,640.71 452.91,644.12 448.09,644.12 444.68,640.71 444.68,635.89 448.09,632.48 452.91,632.48 456.32,635.89" fill="#00ffff" stroke="#000000" stroke-width="1" shape-rendering="geometricPrecision"/>
<circle cx="450.5" cy="638.3" r="4.6" fill="#00ffff" stroke="#000000" stroke-width="1" shape-rendering="geometricPrecision"/>
<circle cx="450.5" cy="638.3" r="2.4" fill="#00ffff" stroke="#000000" stroke-width="1" shape-rendering="geometricPrecision"/>
<polygon points="682.32,640.71 678.91,644.12 674.09,644.12 670.68,640.71 670.68,635.89 674.09,632.48 678.91,632.48 682.32,635.89" fill="#00ffff" stroke="#000000" stroke-width="1" shape-rendering="geometricPrecision"/>
<circle cx="676.5" cy="638.3" r="5.2" fill="#00ffff" stroke="#000000" stroke-width="1" shape-rendering="geometricPrecision"/>
<polyline points="672.9,634.7 680.1,641.9" fill="none" stroke="#000000" stroke-width="1" shape-rendering="geometricPrecision"/>
<polyline points="672.9,641.9 680.1,634.7" fill="none" stroke="#000000" stroke-width="1" shape-rendering="geometricPrecision"/>
<polygon points="716.32,640.71 712.91,644.12 708.09,644.12 704.68,640.71 704.68,635.89 708.09,632.48 712.91,632.48 716.32,635.89" fill="#00ffff" stroke="#000000" stroke-width="1" shape-rendering="geometricPrecision"/>
<circle cx="710.5" cy="638.3" r="4.6" fill="#00ffff" stroke="#000000" stroke-width="1" shape-rendering="geometricPrecision"/>
<circle cx="710.5" cy="638.3" r="2.4" fill="#00ffff" stroke="#000000" stroke-width="1" shape-rendering="geometricPrecision"/>
<rect x="980" y="224.5" width="1" height="7" fill="#007878"/>
<polyline points="980.5,220.5 980.5,225.5 974.3,230.3" fill="none" stroke="#ffff00" stroke-width="2.5" shape-rendering="geometricPrecision" stroke-linejoin="round"/>
<rect x="351.2" y="312.7" width="1" height="7" fill="#007878"/>
<polyline points="351.7,308.7 351.7,313.7 345.5,318.5" fill="none" stroke="#ffff00" stroke-width="2.5" shape-rendering="geometricPrecision" stroke-linejoin="round"/>
<rect x="578.9" y="490.2" width="1" height="7" fill="#007878"/>
<polyline points="579.4,486.2 579.4,491.2 573.2,496" fill="none" stroke="#ffff00" stroke-width="2.5" shape-rendering="geometricPrecision" stroke-linejoin="round"/>
<rect x="59" y="534.5" width="70.3" height="9.8" fill="#00ffff" stroke="#000000" stroke-width="1"/>
<polyline points="64.5,539.5 127.8,539.5" fill="none" stroke="#7a8a8a" stroke-width="1"/>
<polyline points="74.5,537 74.5,542" fill="none" stroke="#7a8a8a" stroke-width="1"/>
<polyline points="82.8,537 82.8,542" fill="none" stroke="#7a8a8a" stroke-width="1"/>
<polyline points="91.1,537 91.1,542" fill="none" stroke="#7a8a8a" stroke-width="1"/>
<polyline points="99.4,537 99.4,542" fill="none" stroke="#7a8a8a" stroke-width="1"/>
<polyline points="107.7,537 107.7,542" fill="none" stroke="#7a8a8a" stroke-width="1"/>
<polyline points="116,537 116,542" fill="none" stroke="#7a8a8a" stroke-width="1"/>
<polyline points="124.3,537 124.3,542" fill="none" stroke="#7a8a8a" stroke-width="1"/>
<rect x="54.5" y="532.5" width="4.8" height="13.8" fill="#00ffff" stroke="#000000" stroke-width="1"/>
<rect x="129.3" y="532.5" width="4.5" height="13.8" fill="#00ffff" stroke="#000000" stroke-width="1"/>
<circle cx="63.8" cy="539.4" r="3" fill="#00ffff" stroke="#000000" stroke-width="1" shape-rendering="geometricPrecision"/>
<rect x="10.8" y="652.5" width="45.5" height="9.8" fill="#00ffff" stroke="#000000" stroke-width="1"/>
<polyline points="16.3,657.5 54.8,657.5" fill="none" stroke="#7a8a8a" stroke-width="1"/>
<polyline points="26.3,655 26.3,660" fill="none" stroke="#7a8a8a" stroke-width="1"/>
<polyline points="34.6,655 34.6,660" fill="none" stroke="#7a8a8a" stroke-width="1"/>
<polyline points="42.9,655 42.9,660" fill="none" stroke="#7a8a8a" stroke-width="1"/>
<polyline points="51.2,655 51.2,660" fill="none" stroke="#7a8a8a" stroke-width="1"/>
<rect x="6.3" y="650.5" width="4.8" height="13.8" fill="#00ffff" stroke="#000000" stroke-width="1"/>
<rect x="56.3" y="650.5" width="4.5" height="13.8" fill="#00ffff" stroke="#000000" stroke-width="1"/>
<circle cx="15.6" cy="657.4" r="3" fill="#00ffff" stroke="#000000" stroke-width="1" shape-rendering="geometricPrecision"/>
<rect x="119.45" y="547.5" width="6.3" height="4.3" fill="#00e0e8" stroke="#000000" stroke-width="1"/>
<rect x="104" y="561" width="8.5" height="2" fill="#00ffff"/>
<rect x="104" y="567" width="8.5" height="2" fill="#00ffff"/>
<rect x="100" y="564" width="19" height="2" fill="#ffff00"/>
<rect x="117" y="564" width="2" height="6" fill="#ffff00"/>
<rect x="108" y="558" width="1" height="1" fill="#ffffff"/>
<rect x="108" y="560" width="1" height="1" fill="#ffffff"/>
<rect x="108" y="570.5" width="1" height="1" fill="#ffffff"/>
<rect x="131" y="561" width="8.5" height="2" fill="#00ffff"/>
<rect x="131" y="567" width="8.5" height="2" fill="#00ffff"/>
<rect x="127" y="564" width="19" height="2" fill="#ffff00"/>
<rect x="144" y="564" width="2" height="6" fill="#ffff00"/>
<rect x="135" y="558" width="1" height="1" fill="#ffffff"/>
<rect x="135" y="560" width="1" height="1" fill="#ffffff"/>
<rect x="135" y="570.5" width="1" height="1" fill="#ffffff"/>
<rect x="106" y="659" width="8.5" height="2" fill="#00ffff"/>
<rect x="106" y="665" width="8.5" height="2" fill="#00ffff"/>
<rect x="102" y="662" width="19" height="2" fill="#ffff00"/>
<rect x="119" y="662" width="2" height="6" fill="#ffff00"/>
<rect x="110" y="656" width="1" height="1" fill="#ffffff"/>
<rect x="110" y="658" width="1" height="1" fill="#ffffff"/>
<rect x="110" y="668.5" width="1" height="1" fill="#ffffff"/>
<rect x="132" y="659" width="8.5" height="2" fill="#00ffff"/>
<rect x="132" y="665" width="8.5" height="2" fill="#00ffff"/>
<rect x="128" y="662" width="19" height="2" fill="#ffff00"/>
<rect x="145" y="662" width="2" height="6" fill="#ffff00"/>
<rect x="136" y="656" width="1" height="1" fill="#ffffff"/>
<rect x="136" y="658" width="1" height="1" fill="#ffffff"/>
<rect x="136" y="668.5" width="1" height="1" fill="#ffffff"/>
<rect x="927.3" y="427" width="5.7" height="25.6" fill="#5ab8b8"/>
<rect x="934.1" y="425.55" width="2.5" height="46.7" fill="#00ffff" stroke="#000000" stroke-width="1"/>
<rect x="953.2" y="425.55" width="2.5" height="46.7" fill="#00ffff" stroke="#000000" stroke-width="1"/>
<rect x="934.1" y="425.55" width="21.6" height="1.2" fill="#00ffff" stroke="#000000" stroke-width="1"/>
<rect x="936.6" y="426.75" width="16.6" height="25" fill="#00ffff" stroke="#000000" stroke-width="1"/>
<rect x="938.5" y="437.55" width="12.5" height="10.7" fill="#00ffff" stroke="#000000" stroke-width="1"/>
<rect x="949.6" y="439.25" width="1.6" height="2" fill="#000000"/>
<rect x="949.6" y="444.25" width="1.6" height="2" fill="#000000"/>
<rect x="938.1" y="441.25" width="1.4" height="3" fill="#000000"/>
<rect x="934.1" y="451.75" width="21.6" height="1.6" fill="#00ffff" stroke="#000000" stroke-width="1"/>
<polygon points="937.3,453.75 952.8,453.75 946.9,461.75 943.1,461.75" fill="#00ffff" stroke="#000000" stroke-width="1" shape-rendering="geometricPrecision"/>
<circle cx="945" cy="458.15" r="1.1" fill="#000000" stroke="#000000" stroke-width="1" shape-rendering="geometricPrecision"/>
<rect x="942" y="461.75" width="6.2" height="2.9" fill="#00ffff" stroke="#000000" stroke-width="1"/>
<rect x="951.6" y="424.35" width="2.5" height="1.4" fill="#00ffff"/>
<rect x="942.1" y="424.95" width="4" height="1" fill="#000000"/>
<rect x="92" y="608" width="7.3" height="25.8" fill="#5ab8b8"/>
<rect x="143.7" y="608" width="6.3" height="25.8" fill="#5ab8b8"/>
<rect x="99.2" y="606.55" width="2.5" height="46.7" fill="#00ffff" stroke="#000000" stroke-width="1"/>
<rect x="118.3" y="606.55" width="2.5" height="46.7" fill="#00ffff" stroke="#000000" stroke-width="1"/>
<rect x="99.2" y="606.55" width="21.6" height="1.2" fill="#00ffff" stroke="#000000" stroke-width="1"/>
<rect x="101.7" y="607.75" width="16.6" height="25" fill="#00ffff" stroke="#000000" stroke-width="1"/>
<rect x="103.6" y="618.55" width="12.5" height="10.7" fill="#00ffff" stroke="#000000" stroke-width="1"/>
<rect x="114.7" y="620.25" width="1.6" height="2" fill="#000000"/>
<rect x="114.7" y="625.25" width="1.6" height="2" fill="#000000"/>
<rect x="103.2" y="622.25" width="1.4" height="3" fill="#000000"/>
<rect x="99.2" y="632.75" width="21.6" height="1.6" fill="#00ffff" stroke="#000000" stroke-width="1"/>
<polygon points="102.4,634.75 117.9,634.75 112,642.75 108.2,642.75" fill="#00ffff" stroke="#000000" stroke-width="1" shape-rendering="geometricPrecision"/>
<circle cx="110.1" cy="639.15" r="1.1" fill="#000000" stroke="#000000" stroke-width="1" shape-rendering="geometricPrecision"/>
<rect x="107.1" y="642.75" width="6.2" height="2.9" fill="#00ffff" stroke="#000000" stroke-width="1"/>
<rect x="116.7" y="605.35" width="2.5" height="1.4" fill="#00ffff"/>
<rect x="107.2" y="605.95" width="4" height="1" fill="#000000"/>
<rect x="121.9" y="606.55" width="2.5" height="46.7" fill="#00ffff" stroke="#000000" stroke-width="1"/>
<rect x="141" y="606.55" width="2.5" height="46.7" fill="#00ffff" stroke="#000000" stroke-width="1"/>
<rect x="121.9" y="606.55" width="21.6" height="1.2" fill="#00ffff" stroke="#000000" stroke-width="1"/>
<rect x="124.4" y="607.75" width="16.6" height="25" fill="#00ffff" stroke="#000000" stroke-width="1"/>
<rect x="126.3" y="618.55" width="12.5" height="10.7" fill="#00ffff" stroke="#000000" stroke-width="1"/>
<rect x="137.4" y="620.25" width="1.6" height="2" fill="#000000"/>
<rect x="137.4" y="625.25" width="1.6" height="2" fill="#000000"/>
<rect x="125.9" y="622.25" width="1.4" height="3" fill="#000000"/>
<rect x="121.9" y="632.75" width="21.6" height="1.6" fill="#00ffff" stroke="#000000" stroke-width="1"/>
<polygon points="125.1,634.75 140.6,634.75 134.7,642.75 130.9,642.75" fill="#00ffff" stroke="#000000" stroke-width="1" shape-rendering="geometricPrecision"/>
<circle cx="132.8" cy="639.15" r="1.1" fill="#000000" stroke="#000000" stroke-width="1" shape-rendering="geometricPrecision"/>
<rect x="129.8" y="642.75" width="6.2" height="2.9" fill="#00ffff" stroke="#000000" stroke-width="1"/>
<rect x="139.4" y="605.35" width="2.5" height="1.4" fill="#00ffff"/>
<rect x="129.9" y="605.95" width="4" height="1" fill="#000000"/>
<rect x="862" y="426.3" width="61" height="16.3" fill="#ece9d8"/>
<rect x="862" y="426.3" width="61" height="1" fill="#d8c8a8"/>
<rect x="862" y="426.3" width="1" height="16.3" fill="#d8c8a8"/>
<rect x="862" y="441.6" width="61" height="1" fill="#ffffff"/>
<rect x="922" y="426.3" width="1" height="16.3" fill="#ffffff"/>
<rect x="886.4" y="446.4" width="37.5" height="14.2" fill="#00ffff" stroke="#000000" stroke-width="1"/>
<rect x="28" y="598.3" width="60.8" height="16.3" fill="#ece9d8"/>
<rect x="28" y="598.3" width="60.8" height="1" fill="#d8c8a8"/>
<rect x="28" y="598.3" width="1" height="16.3" fill="#d8c8a8"/>
<rect x="28" y="613.6" width="60.8" height="1" fill="#ffffff"/>
<rect x="87.8" y="598.3" width="1" height="16.3" fill="#ffffff"/>
<rect x="153.8" y="598.3" width="61.2" height="16.3" fill="#ece9d8"/>
<rect x="153.8" y="598.3" width="61.2" height="1" fill="#d8c8a8"/>
<rect x="153.8" y="598.3" width="1" height="16.3" fill="#d8c8a8"/>
<rect x="153.8" y="613.6" width="61.2" height="1" fill="#ffffff"/>
<rect x="214" y="598.3" width="1" height="16.3" fill="#ffffff"/>
<rect x="51.3" y="618.3" width="37.5" height="14.2" fill="#00ffff" stroke="#000000" stroke-width="1"/>
<rect x="154.3" y="618.3" width="37.5" height="14.2" fill="#00ffff" stroke="#000000" stroke-width="1"/>
<polygon points="1005.3,72.5 1015,72.5 1018,75.7 1018,87.2 1019.8,88.6 1019.8,92.2 1015.2,92.2 1012.1,96.5 1009,92.2 998.3,92.2 998.3,91 1001.8,87.2 1001.8,75.7" fill="#00ffff" stroke="None" stroke-width="1" shape-rendering="geometricPrecision"/>
<polyline points="1015,72.5 1018,75.7 1018,87.2 1019.8,88.6 1019.8,92.2 1015.2,92.2 1012.1,96.5" fill="none" stroke="#ffffff" stroke-width="1" shape-rendering="geometricPrecision"/>
<polyline points="1009,92.2 998.3,92.2" fill="none" stroke="#ffffff" stroke-width="1" shape-rendering="geometricPrecision"/>
<polyline points="998.3,91.6 1001.8,87.2 1001.8,75.7 1005.3,72.5 1015,72.5" fill="none" stroke="#000000" stroke-width="1" shape-rendering="geometricPrecision"/>
<polyline points="1009,92.2 1009.3,93.5 1012.1,96.5" fill="none" stroke="#000000" stroke-width="1" shape-rendering="geometricPrecision"/>
</g>
<g text-rendering="geometricPrecision">
<text x="10.5" y="55" font-size="11.5" fill="#000000" font-weight="bold" font-style="normal" stroke="#000000" stroke-width="0.25" text-anchor="start" textLength="84" lengthAdjust="spacingAndGlyphs">УПРАВЛЕНИЕ</text>
<text x="154" y="55" font-size="11.5" fill="#ffffff" font-weight="bold" font-style="normal" stroke="#ffffff" stroke-width="0.25" text-anchor="start" textLength="81" lengthAdjust="spacingAndGlyphs">Зерноочистка</text>
<text x="300.5" y="55" font-size="11.5" fill="#000000" font-weight="bold" font-style="normal" stroke="#000000" stroke-width="0.25" text-anchor="start" textLength="44" lengthAdjust="spacingAndGlyphs">Размол</text>
<text x="445.5" y="55" font-size="11.5" fill="#000000" font-weight="bold" font-style="normal" stroke="#000000" stroke-width="0.25" text-anchor="start" textLength="70.5" lengthAdjust="spacingAndGlyphs">Выбой муки</text>
<text x="590.5" y="55" font-size="11.5" fill="#000000" font-weight="bold" font-style="normal" stroke="#000000" stroke-width="0.25" text-anchor="start" textLength="89" lengthAdjust="spacingAndGlyphs">Выбой отрубей</text>
<text x="735.5" y="55" font-size="11.5" fill="#000000" font-weight="bold" font-style="normal" stroke="#000000" stroke-width="0.25" text-anchor="start" textLength="80" lengthAdjust="spacingAndGlyphs">Подключение</text>
<text x="693" y="27" font-size="18" fill="#101010" font-weight="normal" font-style="italic" text-anchor="middle" textLength="90" lengthAdjust="spacingAndGlyphs">Мельница</text>
<text x="961.5" y="27" font-size="18" fill="#101010" font-weight="normal" font-style="italic" text-anchor="middle" textLength="73" lengthAdjust="spacingAndGlyphs">17:20:51</text>
<text x="444.75" y="355.3" font-size="10.5" fill="#000000" font-weight="normal" font-style="normal" text-anchor="middle" textLength="10.6" lengthAdjust="spacingAndGlyphs">27</text>
<text x="472.7" y="355.3" font-size="10.5" fill="#000000" font-weight="normal" font-style="normal" text-anchor="middle" textLength="10.6" lengthAdjust="spacingAndGlyphs">26</text>
<text x="500.65" y="355.3" font-size="10.5" fill="#000000" font-weight="normal" font-style="normal" text-anchor="middle" textLength="10.6" lengthAdjust="spacingAndGlyphs">25</text>
<text x="528.6" y="355.3" font-size="10.5" fill="#000000" font-weight="normal" font-style="normal" text-anchor="middle" textLength="10.6" lengthAdjust="spacingAndGlyphs">24</text>
<text x="677" y="354.2" font-size="10.5" fill="#000000" font-weight="normal" font-style="normal" text-anchor="middle" textLength="10.6" lengthAdjust="spacingAndGlyphs">23</text>
<text x="704.9" y="354.2" font-size="10.5" fill="#000000" font-weight="normal" font-style="normal" text-anchor="middle" textLength="10.6" lengthAdjust="spacingAndGlyphs">22</text>
<text x="732.8" y="354.2" font-size="10.5" fill="#000000" font-weight="normal" font-style="normal" text-anchor="middle" textLength="10.6" lengthAdjust="spacingAndGlyphs">21</text>
<text x="760.7" y="354.2" font-size="10.5" fill="#000000" font-weight="normal" font-style="normal" text-anchor="middle" textLength="10.6" lengthAdjust="spacingAndGlyphs">20</text>
<text x="920.5" y="439.1" font-size="13" fill="#000000" font-weight="bold" font-style="normal" text-anchor="end">0</text>
<text x="905.4" y="458" font-size="13" fill="#000000" font-weight="bold" font-style="normal" text-anchor="middle" textLength="27" lengthAdjust="spacingAndGlyphs">Стоп</text>
<text x="86.3" y="611.1" font-size="13" fill="#000000" font-weight="bold" font-style="normal" text-anchor="end">0</text>
<text x="212.5" y="611.1" font-size="13" fill="#000000" font-weight="bold" font-style="normal" text-anchor="end">0</text>
<text x="70.3" y="629.9" font-size="13" fill="#000000" font-weight="bold" font-style="normal" text-anchor="middle" textLength="27" lengthAdjust="spacingAndGlyphs">Стоп</text>
<text x="173.3" y="629.9" font-size="13" fill="#000000" font-weight="bold" font-style="normal" text-anchor="middle" textLength="27" lengthAdjust="spacingAndGlyphs">Стоп</text>
<text x="139.9" y="80.6" font-size="13.2" fill="#ffffff" font-weight="normal" font-style="normal" stroke="#ffffff" stroke-width="0.3" text-anchor="start" textLength="24" lengthAdjust="spacingAndGlyphs">728</text>
<text x="227.5" y="80.6" font-size="13.2" fill="#ffffff" font-weight="normal" font-style="normal" stroke="#ffffff" stroke-width="0.3" text-anchor="start" textLength="24" lengthAdjust="spacingAndGlyphs">710</text>
<text x="17.5" y="165" font-size="13.2" fill="#ffffff" font-weight="normal" font-style="normal" stroke="#ffffff" stroke-width="0.3" text-anchor="start" textLength="24" lengthAdjust="spacingAndGlyphs">727</text>
<text x="150" y="155.8" font-size="13.2" fill="#ffffff" font-weight="normal" font-style="normal" stroke="#ffffff" stroke-width="0.3" text-anchor="start" textLength="24" lengthAdjust="spacingAndGlyphs">724</text>
<text x="150" y="177.6" font-size="13.2" fill="#ffffff" font-weight="normal" font-style="normal" stroke="#ffffff" stroke-width="0.3" text-anchor="start" textLength="24" lengthAdjust="spacingAndGlyphs">725</text>
<text x="150" y="199.5" font-size="13.2" fill="#ffffff" font-weight="normal" font-style="normal" stroke="#ffffff" stroke-width="0.3" text-anchor="start" textLength="24" lengthAdjust="spacingAndGlyphs">726</text>
<text x="83.7" y="228.8" font-size="13.2" fill="#ffffff" font-weight="normal" font-style="normal" stroke="#ffffff" stroke-width="0.3" text-anchor="start" textLength="24" lengthAdjust="spacingAndGlyphs">723</text>
<text x="238.2" y="230.5" font-size="13.2" fill="#ffffff" font-weight="normal" font-style="normal" stroke="#ffffff" stroke-width="0.3" text-anchor="start" textLength="24" lengthAdjust="spacingAndGlyphs">708</text>
<text x="298" y="230.5" font-size="13.2" fill="#ffffff" font-weight="normal" font-style="normal" stroke="#ffffff" stroke-width="0.3" text-anchor="start" textLength="24" lengthAdjust="spacingAndGlyphs">709</text>
<text x="336.2" y="169.5" font-size="13.2" fill="#ffffff" font-weight="normal" font-style="normal" stroke="#ffffff" stroke-width="0.3" text-anchor="start" textLength="24" lengthAdjust="spacingAndGlyphs">700</text>
<text x="400.5" y="190.8" font-size="13.2" fill="#ffffff" font-weight="normal" font-style="normal" stroke="#ffffff" stroke-width="0.3" text-anchor="start" textLength="24" lengthAdjust="spacingAndGlyphs">702</text>
<text x="393.7" y="230.5" font-size="13.2" fill="#ffffff" font-weight="normal" font-style="normal" stroke="#ffffff" stroke-width="0.3" text-anchor="start" textLength="24" lengthAdjust="spacingAndGlyphs">701</text>
<text x="419" y="80.6" font-size="13.2" fill="#ffffff" font-weight="normal" font-style="normal" stroke="#ffffff" stroke-width="0.3" text-anchor="start" textLength="24" lengthAdjust="spacingAndGlyphs">704</text>
<text x="449.9" y="160.6" font-size="13.2" fill="#ffffff" font-weight="normal" font-style="normal" stroke="#ffffff" stroke-width="0.3" text-anchor="start" textLength="24" lengthAdjust="spacingAndGlyphs">703</text>
<text x="659.5" y="80.6" font-size="13.2" fill="#ffffff" font-weight="normal" font-style="normal" stroke="#ffffff" stroke-width="0.3" text-anchor="start" textLength="24" lengthAdjust="spacingAndGlyphs">602</text>
<text x="685" y="156.3" font-size="13.2" fill="#ffffff" font-weight="normal" font-style="normal" stroke="#ffffff" stroke-width="0.3" text-anchor="start" textLength="24" lengthAdjust="spacingAndGlyphs">601</text>
<text x="634.5" y="190.8" font-size="13.2" fill="#ffffff" font-weight="normal" font-style="normal" stroke="#ffffff" stroke-width="0.3" text-anchor="start" textLength="24" lengthAdjust="spacingAndGlyphs">600</text>
<text x="831" y="80.6" font-size="13.2" fill="#ffffff" font-weight="normal" font-style="normal" stroke="#ffffff" stroke-width="0.3" text-anchor="start" textLength="24" lengthAdjust="spacingAndGlyphs">512</text>
<text x="908.5" y="80.6" font-size="13.2" fill="#ffffff" font-weight="normal" font-style="normal" stroke="#ffffff" stroke-width="0.3" text-anchor="start" textLength="24" lengthAdjust="spacingAndGlyphs">508</text>
<text x="846" y="141.8" font-size="13.2" fill="#ffffff" font-weight="normal" font-style="normal" stroke="#ffffff" stroke-width="0.3" text-anchor="start" textLength="24" lengthAdjust="spacingAndGlyphs">509</text>
<text x="886.7" y="169.5" font-size="13.2" fill="#ffffff" font-weight="normal" font-style="normal" stroke="#ffffff" stroke-width="0.3" text-anchor="start" textLength="24" lengthAdjust="spacingAndGlyphs">510</text>
<text x="568" y="230.5" font-size="13.2" fill="#ffffff" font-weight="normal" font-style="normal" stroke="#ffffff" stroke-width="0.3" text-anchor="start" textLength="24" lengthAdjust="spacingAndGlyphs">503</text>
<text x="625.7" y="270.8" font-size="13.2" fill="#ffffff" font-weight="normal" font-style="normal" stroke="#ffffff" stroke-width="0.3" text-anchor="start" textLength="24" lengthAdjust="spacingAndGlyphs">500</text>
<text x="592.5" y="320.8" font-size="13.2" fill="#ffffff" font-weight="normal" font-style="normal" stroke="#ffffff" stroke-width="0.3" text-anchor="start" textLength="24" lengthAdjust="spacingAndGlyphs">502</text>
<text x="572.5" y="345.8" font-size="13.2" fill="#ffffff" font-weight="normal" font-style="normal" stroke="#ffffff" stroke-width="0.3" text-anchor="start" textLength="24" lengthAdjust="spacingAndGlyphs">501</text>
<text x="799.7" y="230.5" font-size="13.2" fill="#ffffff" font-weight="normal" font-style="normal" stroke="#ffffff" stroke-width="0.3" text-anchor="start" textLength="24" lengthAdjust="spacingAndGlyphs">511</text>
<text x="898" y="234.5" font-size="13.2" fill="#ffffff" font-weight="normal" font-style="normal" stroke="#ffffff" stroke-width="0.3" text-anchor="start" textLength="24" lengthAdjust="spacingAndGlyphs">505</text>
<text x="898" y="256.3" font-size="13.2" fill="#ffffff" font-weight="normal" font-style="normal" stroke="#ffffff" stroke-width="0.3" text-anchor="start" textLength="24" lengthAdjust="spacingAndGlyphs">506</text>
<text x="946.7" y="253.8" font-size="13.2" fill="#ffffff" font-weight="normal" font-style="normal" stroke="#ffffff" stroke-width="0.3" text-anchor="start" textLength="24" lengthAdjust="spacingAndGlyphs">507</text>
<text x="988.5" y="230.5" font-size="13.2" fill="#ffffff" font-weight="normal" font-style="normal" stroke="#ffffff" stroke-width="0.3" text-anchor="start" textLength="16" lengthAdjust="spacingAndGlyphs">24</text>
<text x="20" y="339.5" font-size="13.2" fill="#ffffff" font-weight="normal" font-style="normal" stroke="#ffffff" stroke-width="0.3" text-anchor="start" textLength="24" lengthAdjust="spacingAndGlyphs">719</text>
<text x="83" y="339.5" font-size="13.2" fill="#ffffff" font-weight="normal" font-style="normal" stroke="#ffffff" stroke-width="0.3" text-anchor="start" textLength="24" lengthAdjust="spacingAndGlyphs">720</text>
<text x="148" y="339.5" font-size="13.2" fill="#ffffff" font-weight="normal" font-style="normal" stroke="#ffffff" stroke-width="0.3" text-anchor="start" textLength="24" lengthAdjust="spacingAndGlyphs">721</text>
<text x="210" y="339.5" font-size="13.2" fill="#ffffff" font-weight="normal" font-style="normal" stroke="#ffffff" stroke-width="0.3" text-anchor="start" textLength="24" lengthAdjust="spacingAndGlyphs">722</text>
<text x="49.5" y="407.5" font-size="13.2" fill="#ffffff" font-weight="normal" font-style="normal" stroke="#ffffff" stroke-width="0.3" text-anchor="start" textLength="24" lengthAdjust="spacingAndGlyphs">718</text>
<text x="113" y="407.5" font-size="13.2" fill="#ffffff" font-weight="normal" font-style="normal" stroke="#ffffff" stroke-width="0.3" text-anchor="start" textLength="24" lengthAdjust="spacingAndGlyphs">716</text>
<text x="177" y="407.5" font-size="13.2" fill="#ffffff" font-weight="normal" font-style="normal" stroke="#ffffff" stroke-width="0.3" text-anchor="start" textLength="24" lengthAdjust="spacingAndGlyphs">714</text>
<text x="240" y="407.5" font-size="13.2" fill="#ffffff" font-weight="normal" font-style="normal" stroke="#ffffff" stroke-width="0.3" text-anchor="start" textLength="24" lengthAdjust="spacingAndGlyphs">712</text>
<text x="50" y="465.8" font-size="13.2" fill="#ffffff" font-weight="normal" font-style="normal" stroke="#ffffff" stroke-width="0.3" text-anchor="start" textLength="24" lengthAdjust="spacingAndGlyphs">717</text>
<text x="113.7" y="465.8" font-size="13.2" fill="#ffffff" font-weight="normal" font-style="normal" stroke="#ffffff" stroke-width="0.3" text-anchor="start" textLength="24" lengthAdjust="spacingAndGlyphs">715</text>
<text x="178" y="465.8" font-size="13.2" fill="#ffffff" font-weight="normal" font-style="normal" stroke="#ffffff" stroke-width="0.3" text-anchor="start" textLength="24" lengthAdjust="spacingAndGlyphs">713</text>
<text x="241.2" y="465.8" font-size="13.2" fill="#ffffff" font-weight="normal" font-style="normal" stroke="#ffffff" stroke-width="0.3" text-anchor="start" textLength="24" lengthAdjust="spacingAndGlyphs">711</text>
<text x="270" y="323.8" font-size="13.2" fill="#ffffff" font-weight="normal" font-style="normal" stroke="#ffffff" stroke-width="0.3" text-anchor="start" textLength="24" lengthAdjust="spacingAndGlyphs">705</text>
<text x="270" y="345.8" font-size="13.2" fill="#ffffff" font-weight="normal" font-style="normal" stroke="#ffffff" stroke-width="0.3" text-anchor="start" textLength="24" lengthAdjust="spacingAndGlyphs">706</text>
<text x="313.2" y="339.5" font-size="13.2" fill="#ffffff" font-weight="normal" font-style="normal" stroke="#ffffff" stroke-width="0.3" text-anchor="start" textLength="24" lengthAdjust="spacingAndGlyphs">707</text>
<text x="360" y="318.8" font-size="13.2" fill="#ffffff" font-weight="normal" font-style="normal" stroke="#ffffff" stroke-width="0.3" text-anchor="start" textLength="16" lengthAdjust="spacingAndGlyphs">40</text>
<text x="585.5" y="429.5" font-size="13.2" fill="#ffffff" font-weight="normal" font-style="normal" stroke="#ffffff" stroke-width="0.3" text-anchor="start" textLength="24" lengthAdjust="spacingAndGlyphs">606</text>
<text x="588" y="495.8" font-size="13.2" fill="#ffffff" font-weight="normal" font-style="normal" stroke="#ffffff" stroke-width="0.3" text-anchor="start" textLength="16" lengthAdjust="spacingAndGlyphs">32</text>
<text x="625.5" y="495.8" font-size="13.2" fill="#ffffff" font-weight="normal" font-style="normal" stroke="#ffffff" stroke-width="0.3" text-anchor="start" textLength="24" lengthAdjust="spacingAndGlyphs">603</text>
<text x="586.7" y="515" font-size="13.2" fill="#ffffff" font-weight="normal" font-style="normal" stroke="#ffffff" stroke-width="0.3" text-anchor="start" textLength="24" lengthAdjust="spacingAndGlyphs">605</text>
<text x="625.5" y="517.5" font-size="13.2" fill="#ffffff" font-weight="normal" font-style="normal" stroke="#ffffff" stroke-width="0.3" text-anchor="start" textLength="24" lengthAdjust="spacingAndGlyphs">604</text>
<text x="902.5" y="350.8" font-size="13.2" fill="#ffffff" font-weight="normal" font-style="normal" stroke="#ffffff" stroke-width="0.3" text-anchor="start" textLength="24" lengthAdjust="spacingAndGlyphs">504</text>
<text x="62.5" y="500" font-size="13.2" fill="#ffffff" font-weight="normal" font-style="normal" stroke="#ffffff" stroke-width="0.3" text-anchor="start" textLength="24" lengthAdjust="spacingAndGlyphs">801</text>
<text x="102.5" y="524.5" font-size="13.2" fill="#ffffff" font-weight="normal" font-style="normal" stroke="#ffffff" stroke-width="0.3" text-anchor="start" textLength="24" lengthAdjust="spacingAndGlyphs">800</text>
<text x="66.2" y="574.5" font-size="13.2" fill="#ffffff" font-weight="normal" font-style="normal" stroke="#ffffff" stroke-width="0.3" text-anchor="start" textLength="24" lengthAdjust="spacingAndGlyphs">732</text>
<text x="155" y="574.5" font-size="13.2" fill="#ffffff" font-weight="normal" font-style="normal" stroke="#ffffff" stroke-width="0.3" text-anchor="start" textLength="24" lengthAdjust="spacingAndGlyphs">733</text>
<text x="12.5" y="643" font-size="13.2" fill="#ffffff" font-weight="normal" font-style="normal" stroke="#ffffff" stroke-width="0.3" text-anchor="start" textLength="24" lengthAdjust="spacingAndGlyphs">802</text>
<text x="67" y="662.8" font-size="13.2" fill="#ffffff" font-weight="normal" font-style="normal" stroke="#ffffff" stroke-width="0.3" text-anchor="start" textLength="24" lengthAdjust="spacingAndGlyphs">730</text>
<text x="155.7" y="662.8" font-size="13.2" fill="#ffffff" font-weight="normal" font-style="normal" stroke="#ffffff" stroke-width="0.3" text-anchor="start" textLength="24" lengthAdjust="spacingAndGlyphs">731</text>
<text x="103" y="704.8" font-size="13.2" fill="#ffffff" font-weight="normal" font-style="normal" stroke="#ffffff" stroke-width="0.3" text-anchor="start" textLength="24" lengthAdjust="spacingAndGlyphs">729</text>
<text x="210.7" y="691" font-size="13.2" fill="#ffffff" font-weight="normal" font-style="normal" stroke="#ffffff" stroke-width="0.3" text-anchor="start" textLength="24" lengthAdjust="spacingAndGlyphs">728</text>
<text x="375.5" y="644.5" font-size="13.2" fill="#ffffff" font-weight="normal" font-style="normal" stroke="#ffffff" stroke-width="0.3" text-anchor="start" textLength="24" lengthAdjust="spacingAndGlyphs">609</text>
<text x="361.2" y="669.8" font-size="13.2" fill="#ffffff" font-weight="normal" font-style="normal" stroke="#ffffff" stroke-width="0.3" text-anchor="start" textLength="24" lengthAdjust="spacingAndGlyphs">608</text>
<text x="462.5" y="644.5" font-size="13.2" fill="#ffffff" font-weight="normal" font-style="normal" stroke="#ffffff" stroke-width="0.3" text-anchor="start" textLength="24" lengthAdjust="spacingAndGlyphs">610</text>
<text x="469.5" y="694.8" font-size="13.2" fill="#ffffff" font-weight="normal" font-style="normal" stroke="#ffffff" stroke-width="0.3" text-anchor="start" textLength="24" lengthAdjust="spacingAndGlyphs">607</text>
<text x="635.7" y="644.5" font-size="13.2" fill="#ffffff" font-weight="normal" font-style="normal" stroke="#ffffff" stroke-width="0.3" text-anchor="start" textLength="24" lengthAdjust="spacingAndGlyphs">515</text>
<text x="723" y="644.5" font-size="13.2" fill="#ffffff" font-weight="normal" font-style="normal" stroke="#ffffff" stroke-width="0.3" text-anchor="start" textLength="24" lengthAdjust="spacingAndGlyphs">516</text>
<text x="666.7" y="689" font-size="13.2" fill="#ffffff" font-weight="normal" font-style="normal" stroke="#ffffff" stroke-width="0.3" text-anchor="start" textLength="24" lengthAdjust="spacingAndGlyphs">514</text>
<text x="730" y="694.8" font-size="13.2" fill="#ffffff" font-weight="normal" font-style="normal" stroke="#ffffff" stroke-width="0.3" text-anchor="start" textLength="24" lengthAdjust="spacingAndGlyphs">513</text>
<text x="720.8" y="152.6" font-size="11" fill="#a8c4c4" font-weight="normal" font-style="normal" text-anchor="start" textLength="22.5" lengthAdjust="spacingAndGlyphs">AC-1</text>
<text x="923.5" y="555.5" font-size="11" fill="#ffffff" font-weight="bold" font-style="normal" text-anchor="start" textLength="42" lengthAdjust="spacingAndGlyphs">на 1 др.</text>
</g>
</svg>
</body></html>
